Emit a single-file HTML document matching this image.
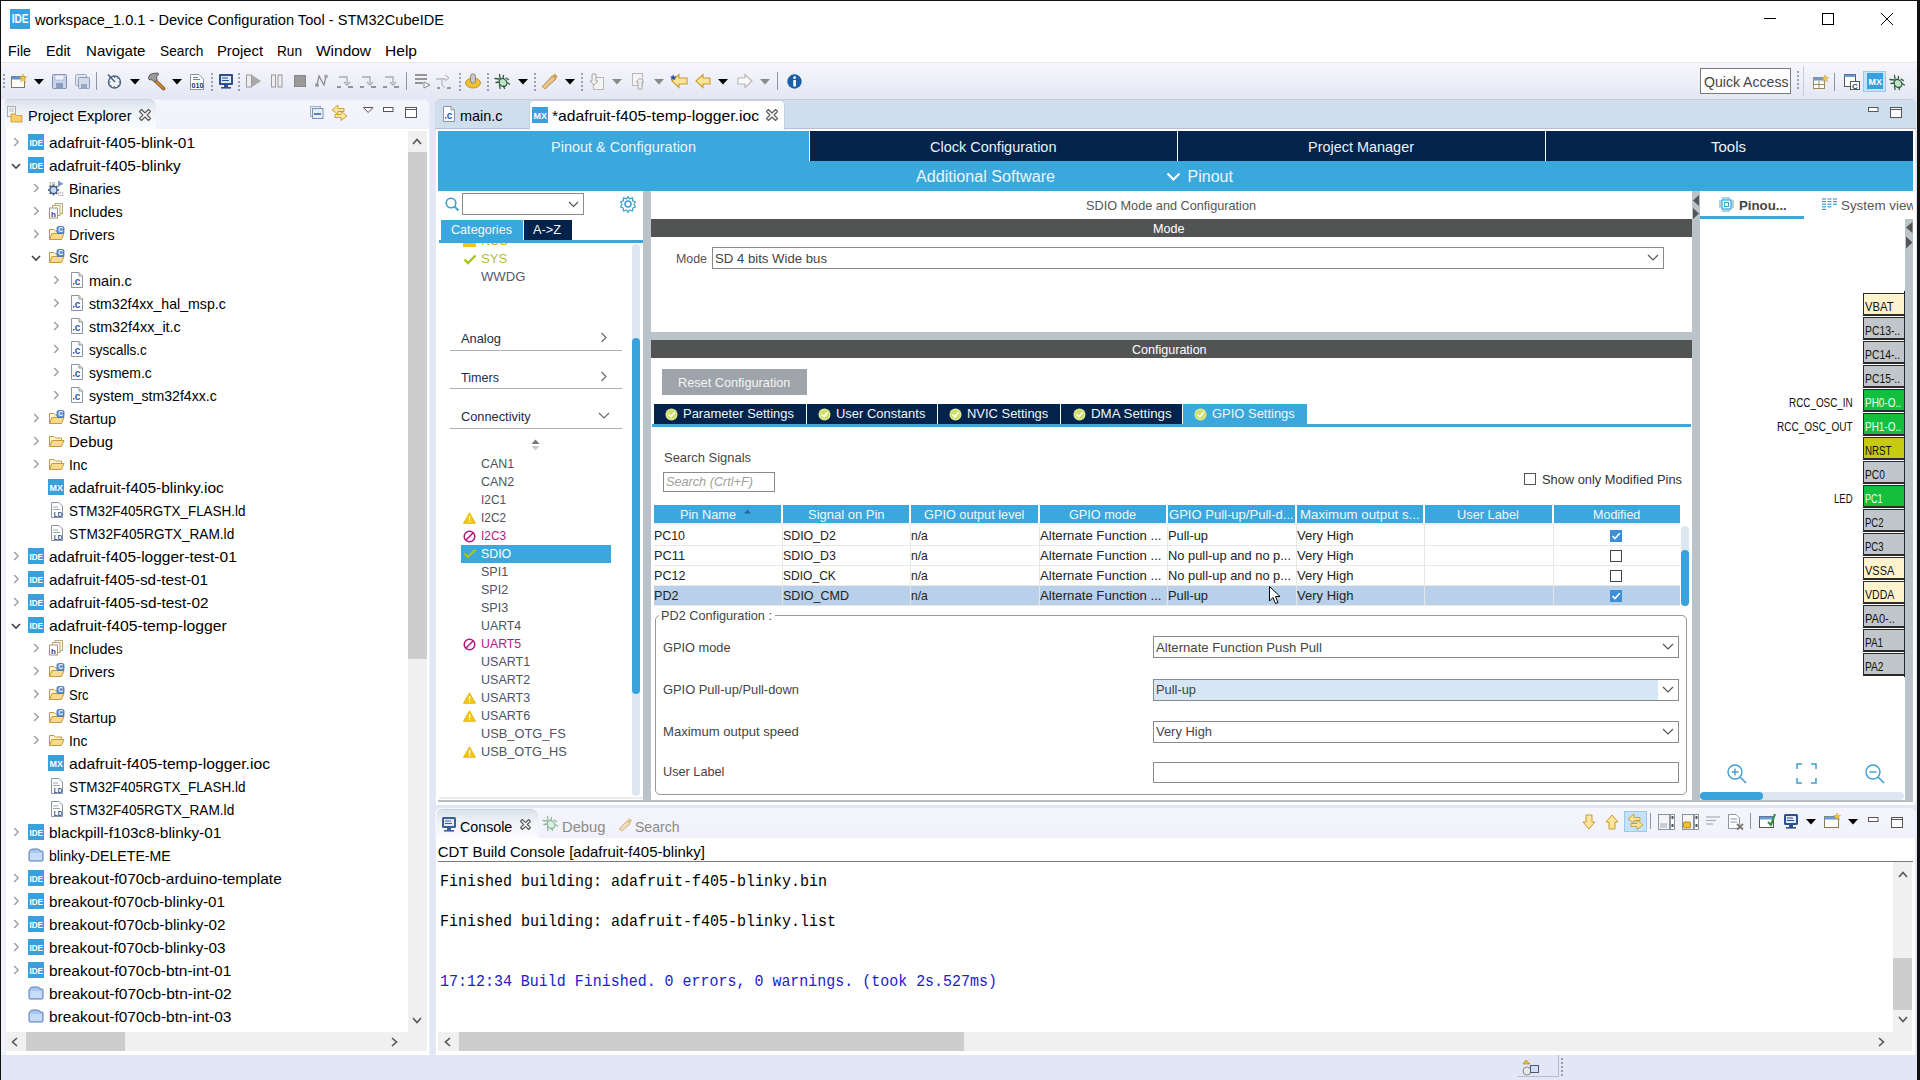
<!DOCTYPE html>
<html><head><meta charset="utf-8"><style>*{box-sizing:border-box;margin:0;padding:0}
html,body{width:1920px;height:1080px;overflow:hidden}
body{position:relative;font-family:"Liberation Sans",sans-serif;background:#e3e6f5}
.a{position:absolute}
.t{position:absolute;white-space:pre;line-height:1;font-family:"Liberation Sans",sans-serif}
svg{overflow:visible}
</style></head><body>
<div class="a" style="left:0px;top:0px;width:1920px;height:1080px;background:#e3e6f5;"></div>
<div class="a" style="left:1px;top:1px;width:1916px;height:61px;background:#fff;"></div>
<div class="a" style="left:1px;top:62px;width:1916px;height:37px;background:linear-gradient(#f7f7fb,#eeeff8 50%,#e2e7f3);"></div>
<div class="a" style="left:1px;top:62px;width:1916px;height:1px;background:#e6e6ec;"></div>
<div class="a" style="left:0px;top:0px;width:1920px;height:1px;background:#111;"></div>
<div class="a" style="left:0px;top:0px;width:1px;height:1080px;background:#111;"></div>
<div class="a" style="left:1917px;top:0px;width:3px;height:1080px;background:#111;"></div>
<svg class="a" style="left:10px;top:9px" width="20" height="20" viewBox="0 0 20 20"><rect width="20" height="20" fill="#38a0dc"/><text x="1.80" y="14.40" font-size="12.40" font-family="Liberation Sans" font-weight="bold" fill="#fff" textLength="16.80" lengthAdjust="spacingAndGlyphs">IDE</text></svg>
<div class="t" style="left:35.00px;top:12.30px;font-size:15px;color:#000;transform:scaleX(0.9740);transform-origin:0 0;">workspace_1.0.1 - Device Configuration Tool - STM32CubeIDE</div>
<svg class="a" style="left:1764px;top:12px" width="14" height="14" viewBox="0 0 14 14"><line x1="0" y1="6.5" x2="12" y2="6.5" stroke="#000" stroke-width="1"/></svg>
<svg class="a" style="left:1822px;top:13px" width="13" height="13" viewBox="0 0 13 13"><rect x="0.5" y="0.5" width="11" height="11" fill="none" stroke="#000" stroke-width="1"/></svg>
<svg class="a" style="left:1881px;top:13px" width="13" height="13" viewBox="0 0 13 13"><path d="M0 0 L12 12 M12 0 L0 12" stroke="#000" stroke-width="1"/></svg>
<div class="t" style="left:8.00px;top:43.30px;font-size:15px;color:#000;transform:scaleX(0.9515);transform-origin:0 0;">File</div>
<div class="t" style="left:45.50px;top:43.30px;font-size:15px;color:#000;transform:scaleX(0.9474);transform-origin:0 0;">Edit</div>
<div class="t" style="left:85.50px;top:43.30px;font-size:15px;color:#000;transform:scaleX(1.0050);transform-origin:0 0;">Navigate</div>
<div class="t" style="left:159.50px;top:43.30px;font-size:15px;color:#000;transform:scaleX(0.9152);transform-origin:0 0;">Search</div>
<div class="t" style="left:217.00px;top:43.30px;font-size:15px;color:#000;transform:scaleX(0.9853);transform-origin:0 0;">Project</div>
<div class="t" style="left:277.00px;top:43.30px;font-size:15px;color:#000;transform:scaleX(0.9081);transform-origin:0 0;">Run</div>
<div class="t" style="left:316.00px;top:43.30px;font-size:15px;color:#000;transform:scaleX(1.0307);transform-origin:0 0;">Window</div>
<div class="t" style="left:385.00px;top:43.30px;font-size:15px;color:#000;transform:scaleX(1.0370);transform-origin:0 0;">Help</div>
<svg class="a" style="left:3px;top:74px" width="2" height="16" viewBox="0 0 2 16"><rect x="0" y="0" width="2" height="2" fill="#9aa0ad"/><rect x="0" y="4" width="2" height="2" fill="#9aa0ad"/><rect x="0" y="8" width="2" height="2" fill="#9aa0ad"/><rect x="0" y="12" width="2" height="2" fill="#9aa0ad"/></svg>
<svg class="a" style="left:11px;top:74px" width="16" height="16" viewBox="0 0 16 16"><rect x="0.5" y="2.5" width="13" height="11" fill="#fff" stroke="#8a7a55"/><rect x="0.5" y="2.5" width="13" height="3" fill="#5b8fd0"/><path d="M12 0 L13 3 L16 3 L13.5 5 L14.5 8 L12 6 L9.5 8 L10.5 5 L8 3 L11 3 Z" fill="#f5c842" stroke="#c9962e" stroke-width="0.5"/></svg>
<svg class="a" style="left:34px;top:79px" width="10" height="6" viewBox="0 0 10 6"><path d="M0 0 H10 L5 5.5 Z" fill="#000"/></svg>
<svg class="a" style="left:52px;top:74px" width="15" height="15" viewBox="0 0 15 15"><rect x="0.5" y="0.5" width="14" height="14" rx="1" fill="#c9d4ea" stroke="#7e8fb5"/><rect x="3" y="1" width="9" height="5" fill="#eef2fa" stroke="#9aa8c8" stroke-width="0.6"/><rect x="4" y="9" width="7" height="6" fill="#8a9bc0"/></svg>
<svg class="a" style="left:75px;top:74px" width="15" height="15" viewBox="0 0 15 15"><rect x="0.5" y="0.5" width="11" height="11" rx="1" fill="#dde3ef" stroke="#a0abc5"/><rect x="3.5" y="3.5" width="11" height="11" rx="1" fill="#d4dcec" stroke="#8d9bbb"/><rect x="6" y="10" width="6" height="5" fill="#9aa8c8"/></svg>
<div class="a" style="left:96px;top:72px;width:1px;height:18px;background:#8d94a3"></div>
<svg class="a" style="left:107px;top:74px" width="15" height="15" viewBox="0 0 15 15"><circle cx="7.5" cy="8" r="6" fill="#f4f6fa" stroke="#4a6282" stroke-width="1.4"/><path d="M7.5 2.5 V4 M13 8 H11.5 M7.5 13.5 V12 M2 8 H3.5 M11.4 4.1 L10.4 5.1 M11.4 11.9 L10.4 10.9 M3.6 11.9 L4.6 10.9" stroke="#4a6282" stroke-width="1"/><path d="M1 0.5 L8 8" stroke="#4a6282" stroke-width="1.6"/></svg>
<svg class="a" style="left:130px;top:79px" width="10" height="6" viewBox="0 0 10 6"><path d="M0 0 H10 L5 5.5 Z" fill="#000"/></svg>
<svg class="a" style="left:147px;top:72px" width="18" height="18" viewBox="0 0 18 18"><path d="M7 7.5 L16.5 16.5" stroke="#7a4a18" stroke-width="3.6" stroke-linecap="round"/><path d="M7 7.5 L16.5 16.5" stroke="#d08a3a" stroke-width="1.8" stroke-linecap="round"/><path d="M1.5 5.5 Q2 2 6 1.5 L10.5 1 Q12 1.2 11.5 2.8 L9.5 4.5 L10 8 L7.5 10 L5 7.5 L3.5 8 Q1 7.5 1.5 5.5 Z" fill="#9a9a9a" stroke="#5a5a5a" stroke-width="1"/></svg>
<svg class="a" style="left:172px;top:79px" width="10" height="6" viewBox="0 0 10 6"><path d="M0 0 H10 L5 5.5 Z" fill="#000"/></svg>
<svg class="a" style="left:190px;top:74px" width="15" height="16" viewBox="0 0 15 16"><path d="M0.5 0.5 H9 L13.5 5 V15.5 H0.5 Z" fill="#fff" stroke="#8a95a8"/><line x1="3" y1="3.5" x2="8" y2="3.5" stroke="#6a7fa8"/><line x1="3" y1="5.5" x2="10" y2="5.5" stroke="#6a7fa8"/><text x="7.5" y="14" font-size="7.5" font-family="Liberation Sans" font-weight="bold" fill="#1d3566" text-anchor="middle" textLength="12" lengthAdjust="spacingAndGlyphs">010</text></svg>
<svg class="a" style="left:211px;top:73px" width="2" height="18" viewBox="0 0 2 18"><rect x="0" y="0" width="2" height="2" fill="#9aa0ad"/><rect x="0" y="4" width="2" height="2" fill="#9aa0ad"/><rect x="0" y="8" width="2" height="2" fill="#9aa0ad"/><rect x="0" y="12" width="2" height="2" fill="#9aa0ad"/><rect x="0" y="16" width="2" height="2" fill="#9aa0ad"/></svg>
<svg class="a" style="left:219px;top:74px" width="14" height="15" viewBox="0 0 14 15"><rect x="0" y="0" width="14" height="11" rx="1" fill="#2d4f8e"/><rect x="2" y="2" width="10" height="7" fill="#e2eaf6"/><line x1="3" y1="4" x2="9" y2="4" stroke="#2d4f8e" stroke-width="1"/><line x1="3" y1="6.5" x2="10" y2="6.5" stroke="#2d4f8e" stroke-width="1"/><rect x="5" y="11" width="4" height="2" fill="#2d4f8e"/><rect x="2" y="13" width="10" height="1.6" fill="#2d4f8e"/></svg>
<svg class="a" style="left:238px;top:73px" width="2" height="18" viewBox="0 0 2 18"><rect x="0" y="0" width="2" height="2" fill="#9aa0ad"/><rect x="0" y="4" width="2" height="2" fill="#9aa0ad"/><rect x="0" y="8" width="2" height="2" fill="#9aa0ad"/><rect x="0" y="12" width="2" height="2" fill="#9aa0ad"/><rect x="0" y="16" width="2" height="2" fill="#9aa0ad"/></svg>
<svg class="a" style="left:246px;top:74px" width="16" height="14" viewBox="0 0 16 14"><rect x="0.5" y="1" width="5" height="12" fill="#eee" stroke="#9a9a9a"/><path d="M6 1 L15 7 L6 13 Z" fill="#aaa"/></svg>
<svg class="a" style="left:271px;top:74px" width="12" height="14" viewBox="0 0 12 14"><rect x="0.5" y="1" width="4" height="12" fill="#eee" stroke="#9a9a9a"/><rect x="7" y="1" width="4" height="12" fill="#eee" stroke="#9a9a9a"/></svg>
<svg class="a" style="left:294px;top:75px" width="12" height="12" viewBox="0 0 12 12"><rect x="0.5" y="0.5" width="11" height="11" fill="#999" stroke="#888"/></svg>
<svg class="a" style="left:315px;top:74px" width="13" height="14" viewBox="0 0 13 14"><path d="M2 11 L4 2 L9 11 L11 2" fill="none" stroke="#888" stroke-width="1.2"/><circle cx="2" cy="11" r="2" fill="#999"/><circle cx="11" cy="2.5" r="2" fill="#aaa"/></svg>
<svg class="a" style="left:337px;top:75px" width="16" height="13" viewBox="0 0 16 13"><path d="M2 2 H10 V8" fill="none" stroke="#aaa" stroke-width="1.3"/><path d="M7 7 L10 10 L13 7" fill="none" stroke="#aaa" stroke-width="1.3"/><line x1="0" y1="12" x2="4" y2="12" stroke="#777" stroke-width="1.5"/><line x1="11" y1="12" x2="16" y2="12" stroke="#777" stroke-width="1.5"/></svg>
<svg class="a" style="left:360px;top:75px" width="16" height="13" viewBox="0 0 16 13"><path d="M2 2 H10 V8" fill="none" stroke="#aaa" stroke-width="1.3"/><path d="M7 7 L10 10 L13 7" fill="none" stroke="#aaa" stroke-width="1.3"/><line x1="0" y1="12" x2="4" y2="12" stroke="#777" stroke-width="1.5"/><line x1="11" y1="12" x2="16" y2="12" stroke="#777" stroke-width="1.5"/></svg>
<svg class="a" style="left:383px;top:75px" width="16" height="13" viewBox="0 0 16 13"><path d="M2 2 H10 V8" fill="none" stroke="#aaa" stroke-width="1.3"/><path d="M7 7 L10 10 L13 7" fill="none" stroke="#aaa" stroke-width="1.3"/><line x1="0" y1="12" x2="4" y2="12" stroke="#777" stroke-width="1.5"/><line x1="11" y1="12" x2="16" y2="12" stroke="#777" stroke-width="1.5"/></svg>
<div class="a" style="left:406px;top:72px;width:1px;height:18px;background:#8d94a3"></div>
<svg class="a" style="left:415px;top:74px" width="16" height="15" viewBox="0 0 16 15"><line x1="0" y1="1" x2="12" y2="1" stroke="#777" stroke-width="1.5"/><line x1="0" y1="5" x2="12" y2="5" stroke="#777" stroke-width="1.5"/><line x1="0" y1="9" x2="8" y2="9" stroke="#777" stroke-width="1.5"/><path d="M9 8 L15 11 L9 14 Z" fill="#fff" stroke="#888"/></svg>
<svg class="a" style="left:436px;top:74px" width="16" height="15" viewBox="0 0 16 15"><line x1="0" y1="5" x2="10" y2="5" stroke="#aaa" stroke-width="1.2"/><path d="M9 1 L13 4 L9 7" fill="none" stroke="#aaa"/><path d="M6 6 V11 L9 14" fill="none" stroke="#aaa"/><line x1="1" y1="14" x2="4" y2="14" stroke="#777" stroke-width="1.4"/><line x1="11" y1="14" x2="15" y2="14" stroke="#777" stroke-width="1.4"/></svg>
<svg class="a" style="left:459px;top:73px" width="2" height="18" viewBox="0 0 2 18"><rect x="0" y="0" width="2" height="2" fill="#9aa0ad"/><rect x="0" y="4" width="2" height="2" fill="#9aa0ad"/><rect x="0" y="8" width="2" height="2" fill="#9aa0ad"/><rect x="0" y="12" width="2" height="2" fill="#9aa0ad"/><rect x="0" y="16" width="2" height="2" fill="#9aa0ad"/></svg>
<svg class="a" style="left:465px;top:73px" width="16" height="16" viewBox="0 0 16 16"><ellipse cx="8" cy="10" rx="7.5" ry="5" fill="#f0c030" stroke="#b08a10" stroke-width="0.8"/><rect x="5.5" y="1" width="5" height="9" rx="2" fill="#c8c8c8" stroke="#777" stroke-width="0.8"/></svg>
<svg class="a" style="left:487px;top:73px" width="2" height="18" viewBox="0 0 2 18"><rect x="0" y="0" width="2" height="2" fill="#9aa0ad"/><rect x="0" y="4" width="2" height="2" fill="#9aa0ad"/><rect x="0" y="8" width="2" height="2" fill="#9aa0ad"/><rect x="0" y="12" width="2" height="2" fill="#9aa0ad"/><rect x="0" y="16" width="2" height="2" fill="#9aa0ad"/></svg>
<svg class="a" style="left:495px;top:74px" width="16" height="16" viewBox="0 0 16 16"><ellipse cx="8" cy="8.5" rx="3.6" ry="4.3" transform="rotate(-40 8 8.5)" fill="#bfe6c6" stroke="#2f5a3e" stroke-width="1.2"/><path d="M4.5 0.5 L5 4 M8.5 1.5 L8 4.5 M0 4.5 L4 5 M1 8.5 L4.5 8 M4.5 11 L5 14.5 M8.5 12 L9.5 14.5 M11 4 L13.5 5.5 M12 8.5 L14.5 10" stroke="#2f5a3e" stroke-width="1.3" stroke-linecap="round"/></svg>
<svg class="a" style="left:518px;top:79px" width="10" height="6" viewBox="0 0 10 6"><path d="M0 0 H10 L5 5.5 Z" fill="#000"/></svg>
<svg class="a" style="left:534px;top:73px" width="2" height="18" viewBox="0 0 2 18"><rect x="0" y="0" width="2" height="2" fill="#9aa0ad"/><rect x="0" y="4" width="2" height="2" fill="#9aa0ad"/><rect x="0" y="8" width="2" height="2" fill="#9aa0ad"/><rect x="0" y="12" width="2" height="2" fill="#9aa0ad"/><rect x="0" y="16" width="2" height="2" fill="#9aa0ad"/></svg>
<svg class="a" style="left:540px;top:73px" width="18" height="17" viewBox="0 0 18 17"><path d="M2 14 L12 3 L16 6 L5 16 Z" fill="#e8c38a" stroke="#a37a40" stroke-width="0.8"/><path d="M12 3 L15 0.5 L17.5 3.5 L16 6 Z" fill="#d4a050"/><path d="M2 14 L5 16 L1 17 Z" fill="#f4e6cc"/></svg>
<svg class="a" style="left:565px;top:79px" width="10" height="6" viewBox="0 0 10 6"><path d="M0 0 H10 L5 5.5 Z" fill="#000"/></svg>
<svg class="a" style="left:581px;top:73px" width="2" height="18" viewBox="0 0 2 18"><rect x="0" y="0" width="2" height="2" fill="#9aa0ad"/><rect x="0" y="4" width="2" height="2" fill="#9aa0ad"/><rect x="0" y="8" width="2" height="2" fill="#9aa0ad"/><rect x="0" y="12" width="2" height="2" fill="#9aa0ad"/><rect x="0" y="16" width="2" height="2" fill="#9aa0ad"/></svg>
<svg class="a" style="left:589px;top:73px" width="15" height="17" viewBox="0 0 15 17"><rect x="4.5" y="4.5" width="10" height="12" fill="#f4f4f4" stroke="#b8b8b8"/><path d="M3 1 V8 H1 L5 12 L9 8 H7 V1 Z" fill="#eee" stroke="#aaa"/></svg>
<svg class="a" style="left:612px;top:79px" width="10" height="6" viewBox="0 0 10 6"><path d="M0 0 H10 L5 5.5 Z" fill="#8a8a8a"/></svg>
<svg class="a" style="left:632px;top:73px" width="15" height="17" viewBox="0 0 15 17"><rect x="0.5" y="0.5" width="10" height="12" fill="#f4f4f4" stroke="#b8b8b8"/><path d="M6 16 V9 H4 L8 5 L12 9 H10 V16 Z" fill="#eee" stroke="#aaa"/></svg>
<svg class="a" style="left:654px;top:79px" width="10" height="6" viewBox="0 0 10 6"><path d="M0 0 H10 L5 5.5 Z" fill="#8a8a8a"/></svg>
<svg class="a" style="left:670px;top:74px" width="18" height="15" viewBox="0 0 18 15"><path d="M17 4 H9 V0.5 L2 7 L9 13.5 V10 H17 Z" fill="#fbe59a" stroke="#c99a2a" stroke-width="1.1"/><path d="M3 0 L4 2.5 L6.5 2 L4.5 4 L5.5 6 L3 5 L1 6.5 L1.5 4 L0 2.5 L2.5 2.5 Z" fill="#1f4fa0"/></svg>
<svg class="a" style="left:695px;top:74px" width="16" height="15" viewBox="0 0 16 15"><path d="M15 4 H8 V0.5 L1 7 L8 13.5 V10 H15 Z" fill="#fbe59a" stroke="#c99a2a" stroke-width="1.1"/></svg>
<svg class="a" style="left:718px;top:79px" width="10" height="6" viewBox="0 0 10 6"><path d="M0 0 H10 L5 5.5 Z" fill="#000"/></svg>
<svg class="a" style="left:737px;top:74px" width="16" height="15" viewBox="0 0 16 15"><path d="M1 4 H8 V0.5 L15 7 L8 13.5 V10 H1 Z" fill="#fafafa" stroke="#b5b5b5" stroke-width="1.1"/></svg>
<svg class="a" style="left:760px;top:79px" width="10" height="6" viewBox="0 0 10 6"><path d="M0 0 H10 L5 5.5 Z" fill="#8a8a8a"/></svg>
<div class="a" style="left:777px;top:72px;width:1px;height:18px;background:#8d94a3"></div>
<svg class="a" style="left:787px;top:74px" width="15" height="15" viewBox="0 0 15 15"><circle cx="7.5" cy="7.5" r="7.2" fill="#1a5fa8"/><rect x="6.3" y="6" width="2.6" height="6.5" fill="#fff"/><circle cx="7.6" cy="3.7" r="1.4" fill="#fff"/></svg>
<div class="a" style="left:1700px;top:68px;width:91px;height:26px;background:#fff;border:1px solid #7a7a7a"></div>
<div class="t" style="left:1703.50px;top:73.80px;font-size:15px;color:#444;transform:scaleX(0.9386);transform-origin:0 0;">Quick Access</div>
<svg class="a" style="left:1797px;top:71px" width="2" height="20" viewBox="0 0 2 20"><rect x="0" y="0" width="2" height="2" fill="#9aa0ad"/><rect x="0" y="4" width="2" height="2" fill="#9aa0ad"/><rect x="0" y="8" width="2" height="2" fill="#9aa0ad"/><rect x="0" y="12" width="2" height="2" fill="#9aa0ad"/><rect x="0" y="16" width="2" height="2" fill="#9aa0ad"/></svg>
<div class="a" style="left:1803px;top:66px;width:1px;height:30px;background:#c8ccd8"></div>
<svg class="a" style="left:1813px;top:75px" width="16" height="15" viewBox="0 0 16 15"><rect x="0.5" y="2.5" width="11" height="11" fill="#fff" stroke="#9a8a5a"/><rect x="0.5" y="2.5" width="11" height="3" fill="#6b9ad8"/><line x1="6" y1="5.5" x2="6" y2="13.5" stroke="#9a8a5a"/><line x1="0.5" y1="9.5" x2="11.5" y2="9.5" stroke="#9a8a5a"/><path d="M12 0 L13 2.5 L15.5 2.5 L13.5 4 L14.5 6.5 L12 5 L9.5 6.5 L10.5 4 L8.5 2.5 L11 2.5 Z" fill="#f5c842" stroke="#c9962e" stroke-width="0.5"/></svg>
<div class="a" style="left:1834px;top:73px;width:1px;height:18px;background:#8d94a3"></div>
<svg class="a" style="left:1844px;top:74px" width="16" height="16" viewBox="0 0 16 16"><rect x="0.5" y="0.5" width="11" height="12" fill="#fff" stroke="#555"/><rect x="0.5" y="0.5" width="11" height="2.5" fill="#6b9ad8"/><rect x="6.5" y="7.5" width="9" height="8" fill="#fff" stroke="#555"/><text x="11" y="14.5" font-size="8" font-family="Liberation Sans" font-weight="bold" fill="#1d3f7a" text-anchor="middle">C</text></svg>
<div class="a" style="left:1863px;top:71px;width:23px;height:21px;background:#c5e2fa;border:1px solid #99c9f0"></div>
<svg class="a" style="left:1867px;top:73px" width="16" height="16" viewBox="0 0 16 16"><rect width="16" height="16" fill="#38a0dc"/><text x="1.44" y="11.52" font-size="9.92" font-family="Liberation Sans" font-weight="bold" fill="#fff" textLength="13.44" lengthAdjust="spacingAndGlyphs">MX</text></svg>
<svg class="a" style="left:1890px;top:75px" width="16" height="16" viewBox="0 0 16 16"><ellipse cx="8" cy="8.5" rx="3.6" ry="4.3" transform="rotate(-40 8 8.5)" fill="#bfe6c6" stroke="#2f5a3e" stroke-width="1.2"/><path d="M4.5 0.5 L5 4 M8.5 1.5 L8 4.5 M0 4.5 L4 5 M1 8.5 L4.5 8 M4.5 11 L5 14.5 M8.5 12 L9.5 14.5 M11 4 L13.5 5.5 M12 8.5 L14.5 10" stroke="#2f5a3e" stroke-width="1.3" stroke-linecap="round"/></svg>
<div class="a" style="left:1px;top:99px;width:4px;height:956px;background:#f2f3fa;"></div>
<div class="a" style="left:5px;top:99px;width:425px;height:956px;background:#fff;border-radius:6px 6px 0 0;border:1px solid #eceef8;border-bottom:none"></div>
<div class="a" style="left:5px;top:99px;width:425px;height:30px;background:linear-gradient(#f5f6fc,#f0f1fa);border-radius:6px 6px 0 0;border:1px solid #e9ebf6;border-bottom:none"></div>
<div class="a" style="left:5px;top:99px;width:151px;height:30px;background:linear-gradient(#d9e3ec,#eef2f7 40%,#fbfcfe);border-radius:6px 8px 0 0;border-top:1px solid #c9d2dc"></div>
<svg class="a" style="left:7px;top:106px" width="16" height="17" viewBox="0 0 16 17"><rect x="0.5" y="0.5" width="8" height="10" fill="#f4f4f4" stroke="#aaa"/><line x1="2" y1="3" x2="7" y2="3" stroke="#bbb"/><line x1="2" y1="5" x2="7" y2="5" stroke="#bbb"/><path d="M4 8 h4 l1.5 1.5 H15 V16 H4 Z" fill="#f7d06a" stroke="#c9962e" stroke-width="0.8"/></svg>
<div class="t" style="left:27.50px;top:107.80px;font-size:15px;color:#000;transform:scaleX(0.9698);transform-origin:0 0;">Project Explorer</div>
<svg class="a" style="left:139px;top:109px" width="12" height="12" viewBox="0 0 12 12"><path d="M0.50 2.50 L2.50 0.50 L6.00 4.00 L9.50 0.50 L11.50 2.50 L8.00 6.00 L11.50 9.50 L9.50 11.50 L6.00 8.00 L2.50 11.50 L0.50 9.50 L4.00 6.00 Z" fill="#fff" stroke="#555" stroke-width="1.1" stroke-linejoin="round"/></svg>
<svg class="a" style="left:310px;top:106px" width="14" height="13" viewBox="0 0 14 13"><rect x="0.5" y="0.5" width="10" height="10" fill="#e8eef8" stroke="#9fb0cc"/><rect x="2.5" y="2.5" width="10.5" height="10" fill="#dff0fb" stroke="#7e92b5"/><line x1="4" y1="8" x2="11" y2="8" stroke="#1d3f7a" stroke-width="1.3"/></svg>
<svg class="a" style="left:331px;top:104px" width="17" height="17" viewBox="0 0 17 17"><path d="M7 1 L1 6 L7 10 V7.5 H13 V4.5 H7 Z" fill="#fbe59a" stroke="#c99a2a" stroke-width="0.9"/><path d="M10 7 L16 12 L10 16.5 V13.5 H4 V10.5 H10 Z" fill="#fbe59a" stroke="#c99a2a" stroke-width="0.9"/></svg>
<svg class="a" style="left:363px;top:107px" width="11" height="6" viewBox="0 0 11 6"><path d="M0.5 0.5 H10 L5.2 5.5 Z" fill="#fff" stroke="#555" stroke-width="1"/></svg>
<svg class="a" style="left:383px;top:107px" width="11" height="5" viewBox="0 0 11 5"><rect x="0.5" y="0.5" width="9.5" height="4" fill="#fff" stroke="#555" stroke-width="1"/></svg>
<svg class="a" style="left:405px;top:107px" width="12" height="11" viewBox="0 0 12 11"><rect x="0.5" y="0.5" width="11" height="10" fill="#fff" stroke="#555" stroke-width="1"/><line x1="0.5" y1="2.5" x2="11.5" y2="2.5" stroke="#555"/></svg>
<div class="a" style="left:408px;top:131px;width:19px;height:901px;background:#f0f0f0;"></div>
<div class="a" style="left:408px;top:152px;width:19px;height:507px;background:#cdcdcd;"></div>
<svg class="a" style="left:412px;top:138px" width="10" height="7" viewBox="0 0 10 7"><path d="M1 6 L5 1.5 L9 6" fill="none" stroke="#555" stroke-width="1.6"/></svg>
<svg class="a" style="left:412px;top:1017px" width="10" height="7" viewBox="0 0 10 7"><path d="M1 1 L5 5.5 L9 1" fill="none" stroke="#555" stroke-width="1.6"/></svg>
<div class="a" style="left:5px;top:1032px;width:403px;height:19px;background:#f0f0f0;"></div>
<div class="a" style="left:26px;top:1032px;width:99px;height:19px;background:#cdcdcd;"></div>
<svg class="a" style="left:11px;top:1037px" width="7" height="10" viewBox="0 0 7 10"><path d="M6 1 L1.5 5 L6 9" fill="none" stroke="#555" stroke-width="1.6"/></svg>
<svg class="a" style="left:391px;top:1037px" width="7" height="10" viewBox="0 0 7 10"><path d="M1 1 L5.5 5 L1 9" fill="none" stroke="#555" stroke-width="1.6"/></svg>
<div class="a" style="left:408px;top:1032px;width:19px;height:19px;background:#f0f0f0;"></div>
<svg class="a" style="left:12px;top:137px" width="8" height="10" viewBox="0 0 8 10"><path d="M2.2 1 L6.2 5 L2.2 9" fill="none" stroke="#9a9a9a" stroke-width="1.3"/></svg>
<svg class="a" style="left:28px;top:134px" width="16" height="16" viewBox="0 0 16 16"><rect width="16" height="16" fill="#38a0dc"/><text x="1.44" y="11.52" font-size="9.92" font-family="Liberation Sans" font-weight="bold" fill="#fff" textLength="13.44" lengthAdjust="spacingAndGlyphs">IDE</text></svg>
<div class="t" style="left:49.00px;top:134.80px;font-size:15px;color:#000;transform:scaleX(1.0300);transform-origin:0 0;">adafruit-f405-blink-01</div>
<svg class="a" style="left:11px;top:162px" width="10" height="8" viewBox="0 0 10 8"><path d="M1 2 L5 6 L9 2" fill="none" stroke="#444" stroke-width="1.6"/></svg>
<svg class="a" style="left:28px;top:157px" width="16" height="16" viewBox="0 0 16 16"><rect width="16" height="16" fill="#38a0dc"/><text x="1.44" y="11.52" font-size="9.92" font-family="Liberation Sans" font-weight="bold" fill="#fff" textLength="13.44" lengthAdjust="spacingAndGlyphs">IDE</text></svg>
<div class="t" style="left:49.00px;top:157.80px;font-size:15px;color:#000;transform:scaleX(1.0327);transform-origin:0 0;">adafruit-f405-blinky</div>
<svg class="a" style="left:32px;top:183px" width="8" height="10" viewBox="0 0 8 10"><path d="M2.2 1 L6.2 5 L2.2 9" fill="none" stroke="#9a9a9a" stroke-width="1.3"/></svg>
<svg class="a" style="left:48px;top:180px" width="16" height="16" viewBox="0 0 16 16"><circle cx="5.5" cy="10" r="3.6" fill="#c8d6ea" stroke="#34507e" stroke-width="1.2"/><path d="M5.5 4.5 V6.3 M5.5 13.7 V15.5 M0 10 H1.8 M9.2 10 H11 M1.6 6.1 L2.9 7.4 M8.1 12.6 L9.4 13.9 M1.6 13.9 L2.9 12.6 M8.1 7.4 L9.4 6.1" stroke="#34507e" stroke-width="1.4"/><path d="M10 0.5 L15.5 3.8 L10 7 Z" fill="#7f98c4"/><text x="1" y="5.5" font-size="5.5" font-family="Liberation Sans" fill="#777">10</text><text x="10" y="15.5" font-size="5.5" font-family="Liberation Sans" fill="#999">01</text></svg>
<div class="t" style="left:69.00px;top:180.80px;font-size:15px;color:#000;transform:scaleX(0.9547);transform-origin:0 0;">Binaries</div>
<svg class="a" style="left:32px;top:206px" width="8" height="10" viewBox="0 0 8 10"><path d="M2.2 1 L6.2 5 L2.2 9" fill="none" stroke="#9a9a9a" stroke-width="1.3"/></svg>
<svg class="a" style="left:48px;top:203px" width="16" height="16" viewBox="0 0 16 16"><rect x="7" y="0.5" width="7.5" height="10" fill="#fffaf0" stroke="#b8a878"/><rect x="4.5" y="2.5" width="7.5" height="10" fill="#fffaf0" stroke="#b8a878"/><rect x="1.5" y="5" width="8" height="10" fill="#fff" stroke="#a89868"/><text x="5.5" y="13.5" font-size="8" font-family="Liberation Sans" font-weight="bold" fill="#2a3f78" text-anchor="middle">h</text></svg>
<div class="t" style="left:69.00px;top:203.80px;font-size:15px;color:#000;transform:scaleX(0.9620);transform-origin:0 0;">Includes</div>
<svg class="a" style="left:32px;top:229px" width="8" height="10" viewBox="0 0 8 10"><path d="M2.2 1 L6.2 5 L2.2 9" fill="none" stroke="#9a9a9a" stroke-width="1.3"/></svg>
<svg class="a" style="left:48px;top:226px" width="17" height="16" viewBox="0 0 17 16"><path d="M1.5 13.5 V3.5 H6 L7.5 5 H13.5 V7.5" fill="#fdf3d6" stroke="#c49a3c" stroke-width="1"/><path d="M1.5 13.5 L4 7.5 H16 L13.5 13.5 Z" fill="#f8d98e" stroke="#c49a3c" stroke-width="1" stroke-linejoin="round"/><rect x="9" y="0.5" width="7" height="7" rx="1.5" fill="#5b8fd6" stroke="#3f6fb8" stroke-width="0.8"/><text x="12.5" y="6.3" font-size="6.5" font-family="Liberation Sans" font-weight="bold" fill="#fff" text-anchor="middle">C</text></svg>
<div class="t" style="left:69.00px;top:226.80px;font-size:15px;color:#000;transform:scaleX(0.9632);transform-origin:0 0;">Drivers</div>
<svg class="a" style="left:31px;top:254px" width="10" height="8" viewBox="0 0 10 8"><path d="M1 2 L5 6 L9 2" fill="none" stroke="#444" stroke-width="1.6"/></svg>
<svg class="a" style="left:48px;top:249px" width="17" height="16" viewBox="0 0 17 16"><path d="M1.5 13.5 V3.5 H6 L7.5 5 H13.5 V7.5" fill="#fdf3d6" stroke="#c49a3c" stroke-width="1"/><path d="M1.5 13.5 L4 7.5 H16 L13.5 13.5 Z" fill="#f8d98e" stroke="#c49a3c" stroke-width="1" stroke-linejoin="round"/><rect x="9" y="0.5" width="7" height="7" rx="1.5" fill="#5b8fd6" stroke="#3f6fb8" stroke-width="0.8"/><text x="12.5" y="6.3" font-size="6.5" font-family="Liberation Sans" font-weight="bold" fill="#fff" text-anchor="middle">C</text></svg>
<div class="t" style="left:69.00px;top:249.80px;font-size:15px;color:#000;transform:scaleX(0.8667);transform-origin:0 0;">Src</div>
<svg class="a" style="left:52px;top:275px" width="8" height="10" viewBox="0 0 8 10"><path d="M2.2 1 L6.2 5 L2.2 9" fill="none" stroke="#9a9a9a" stroke-width="1.3"/></svg>
<svg class="a" style="left:70px;top:272px" width="14" height="16" viewBox="0 0 14 16"><path d="M1.5 0.5 H9 L12.5 4 V15.5 H1.5 Z" fill="#fff" stroke="#8a95a8"/><path d="M9 0.5 V4 H12.5" fill="#f4e3b0" stroke="#8a95a8"/><text x="7.5" y="13" font-size="10" font-family="Liberation Sans" font-weight="bold" fill="#2b5aa8" text-anchor="middle">c</text><rect x="3" y="11" width="1.4" height="1.6" fill="#2b5aa8"/></svg>
<div class="t" style="left:89.00px;top:272.80px;font-size:15px;color:#000;transform:scaleX(0.9675);transform-origin:0 0;">main.c</div>
<svg class="a" style="left:52px;top:298px" width="8" height="10" viewBox="0 0 8 10"><path d="M2.2 1 L6.2 5 L2.2 9" fill="none" stroke="#9a9a9a" stroke-width="1.3"/></svg>
<svg class="a" style="left:70px;top:295px" width="14" height="16" viewBox="0 0 14 16"><path d="M1.5 0.5 H9 L12.5 4 V15.5 H1.5 Z" fill="#fff" stroke="#8a95a8"/><path d="M9 0.5 V4 H12.5" fill="#f4e3b0" stroke="#8a95a8"/><text x="7.5" y="13" font-size="10" font-family="Liberation Sans" font-weight="bold" fill="#2b5aa8" text-anchor="middle">c</text><rect x="3" y="11" width="1.4" height="1.6" fill="#2b5aa8"/></svg>
<div class="t" style="left:89.00px;top:295.80px;font-size:15px;color:#000;transform:scaleX(0.9426);transform-origin:0 0;">stm32f4xx_hal_msp.c</div>
<svg class="a" style="left:52px;top:321px" width="8" height="10" viewBox="0 0 8 10"><path d="M2.2 1 L6.2 5 L2.2 9" fill="none" stroke="#9a9a9a" stroke-width="1.3"/></svg>
<svg class="a" style="left:70px;top:318px" width="14" height="16" viewBox="0 0 14 16"><path d="M1.5 0.5 H9 L12.5 4 V15.5 H1.5 Z" fill="#fff" stroke="#8a95a8"/><path d="M9 0.5 V4 H12.5" fill="#f4e3b0" stroke="#8a95a8"/><text x="7.5" y="13" font-size="10" font-family="Liberation Sans" font-weight="bold" fill="#2b5aa8" text-anchor="middle">c</text><rect x="3" y="11" width="1.4" height="1.6" fill="#2b5aa8"/></svg>
<div class="t" style="left:89.00px;top:318.80px;font-size:15px;color:#000;transform:scaleX(0.9570);transform-origin:0 0;">stm32f4xx_it.c</div>
<svg class="a" style="left:52px;top:344px" width="8" height="10" viewBox="0 0 8 10"><path d="M2.2 1 L6.2 5 L2.2 9" fill="none" stroke="#9a9a9a" stroke-width="1.3"/></svg>
<svg class="a" style="left:70px;top:341px" width="14" height="16" viewBox="0 0 14 16"><path d="M1.5 0.5 H9 L12.5 4 V15.5 H1.5 Z" fill="#fff" stroke="#8a95a8"/><path d="M9 0.5 V4 H12.5" fill="#f4e3b0" stroke="#8a95a8"/><text x="7.5" y="13" font-size="10" font-family="Liberation Sans" font-weight="bold" fill="#2b5aa8" text-anchor="middle">c</text><rect x="3" y="11" width="1.4" height="1.6" fill="#2b5aa8"/></svg>
<div class="t" style="left:89.00px;top:341.80px;font-size:15px;color:#000;transform:scaleX(0.8997);transform-origin:0 0;">syscalls.c</div>
<svg class="a" style="left:52px;top:367px" width="8" height="10" viewBox="0 0 8 10"><path d="M2.2 1 L6.2 5 L2.2 9" fill="none" stroke="#9a9a9a" stroke-width="1.3"/></svg>
<svg class="a" style="left:70px;top:364px" width="14" height="16" viewBox="0 0 14 16"><path d="M1.5 0.5 H9 L12.5 4 V15.5 H1.5 Z" fill="#fff" stroke="#8a95a8"/><path d="M9 0.5 V4 H12.5" fill="#f4e3b0" stroke="#8a95a8"/><text x="7.5" y="13" font-size="10" font-family="Liberation Sans" font-weight="bold" fill="#2b5aa8" text-anchor="middle">c</text><rect x="3" y="11" width="1.4" height="1.6" fill="#2b5aa8"/></svg>
<div class="t" style="left:89.00px;top:364.80px;font-size:15px;color:#000;transform:scaleX(0.9296);transform-origin:0 0;">sysmem.c</div>
<svg class="a" style="left:52px;top:390px" width="8" height="10" viewBox="0 0 8 10"><path d="M2.2 1 L6.2 5 L2.2 9" fill="none" stroke="#9a9a9a" stroke-width="1.3"/></svg>
<svg class="a" style="left:70px;top:387px" width="14" height="16" viewBox="0 0 14 16"><path d="M1.5 0.5 H9 L12.5 4 V15.5 H1.5 Z" fill="#fff" stroke="#8a95a8"/><path d="M9 0.5 V4 H12.5" fill="#f4e3b0" stroke="#8a95a8"/><text x="7.5" y="13" font-size="10" font-family="Liberation Sans" font-weight="bold" fill="#2b5aa8" text-anchor="middle">c</text><rect x="3" y="11" width="1.4" height="1.6" fill="#2b5aa8"/></svg>
<div class="t" style="left:89.00px;top:387.80px;font-size:15px;color:#000;transform:scaleX(0.9402);transform-origin:0 0;">system_stm32f4xx.c</div>
<svg class="a" style="left:32px;top:413px" width="8" height="10" viewBox="0 0 8 10"><path d="M2.2 1 L6.2 5 L2.2 9" fill="none" stroke="#9a9a9a" stroke-width="1.3"/></svg>
<svg class="a" style="left:48px;top:410px" width="17" height="16" viewBox="0 0 17 16"><path d="M1.5 13.5 V3.5 H6 L7.5 5 H13.5 V7.5" fill="#fdf3d6" stroke="#c49a3c" stroke-width="1"/><path d="M1.5 13.5 L4 7.5 H16 L13.5 13.5 Z" fill="#f8d98e" stroke="#c49a3c" stroke-width="1" stroke-linejoin="round"/><rect x="9" y="0.5" width="7" height="7" rx="1.5" fill="#5b8fd6" stroke="#3f6fb8" stroke-width="0.8"/><text x="12.5" y="6.3" font-size="6.5" font-family="Liberation Sans" font-weight="bold" fill="#fff" text-anchor="middle">C</text></svg>
<div class="t" style="left:69.00px;top:410.80px;font-size:15px;color:#000;transform:scaleX(0.9767);transform-origin:0 0;">Startup</div>
<svg class="a" style="left:32px;top:436px" width="8" height="10" viewBox="0 0 8 10"><path d="M2.2 1 L6.2 5 L2.2 9" fill="none" stroke="#9a9a9a" stroke-width="1.3"/></svg>
<svg class="a" style="left:48px;top:433px" width="17" height="16" viewBox="0 0 17 16"><path d="M1.5 13.5 V3.5 H6 L7.5 5 H13.5 V7.5" fill="#fdf3d6" stroke="#c49a3c" stroke-width="1"/><path d="M1.5 13.5 L4 7.5 H16 L13.5 13.5 Z" fill="#f8d98e" stroke="#c49a3c" stroke-width="1" stroke-linejoin="round"/></svg>
<div class="t" style="left:69.00px;top:433.80px;font-size:15px;color:#000;">Debug</div>
<svg class="a" style="left:32px;top:459px" width="8" height="10" viewBox="0 0 8 10"><path d="M2.2 1 L6.2 5 L2.2 9" fill="none" stroke="#9a9a9a" stroke-width="1.3"/></svg>
<svg class="a" style="left:48px;top:456px" width="17" height="16" viewBox="0 0 17 16"><path d="M1.5 13.5 V3.5 H6 L7.5 5 H13.5 V7.5" fill="#fdf3d6" stroke="#c49a3c" stroke-width="1"/><path d="M1.5 13.5 L4 7.5 H16 L13.5 13.5 Z" fill="#f8d98e" stroke="#c49a3c" stroke-width="1" stroke-linejoin="round"/></svg>
<div class="t" style="left:69.00px;top:456.80px;font-size:15px;color:#000;transform:scaleX(0.9243);transform-origin:0 0;">Inc</div>
<svg class="a" style="left:48px;top:479px" width="16" height="16" viewBox="0 0 16 16"><rect width="16" height="16" fill="#38a0dc"/><text x="1.44" y="11.52" font-size="9.92" font-family="Liberation Sans" font-weight="bold" fill="#fff" textLength="13.44" lengthAdjust="spacingAndGlyphs">MX</text></svg>
<div class="t" style="left:69.00px;top:479.80px;font-size:15px;color:#000;transform:scaleX(1.0331);transform-origin:0 0;">adafruit-f405-blinky.ioc</div>
<svg class="a" style="left:50px;top:502px" width="14" height="16" viewBox="0 0 14 16"><path d="M1.5 0.5 H9 L12.5 4 V15.5 H1.5 Z" fill="#fff" stroke="#8a95a8"/><line x1="3" y1="5" x2="8" y2="5" stroke="#9aa"/><line x1="3" y1="7.5" x2="10" y2="7.5" stroke="#9aa"/><text x="8" y="14.5" font-size="6.5" font-family="Liberation Sans" font-weight="bold" fill="#2b4f8e" text-anchor="middle">LD</text></svg>
<div class="t" style="left:69.00px;top:502.80px;font-size:15px;color:#000;transform:scaleX(0.8971);transform-origin:0 0;">STM32F405RGTX_FLASH.ld</div>
<svg class="a" style="left:50px;top:525px" width="14" height="16" viewBox="0 0 14 16"><path d="M1.5 0.5 H9 L12.5 4 V15.5 H1.5 Z" fill="#fff" stroke="#8a95a8"/><line x1="3" y1="5" x2="8" y2="5" stroke="#9aa"/><line x1="3" y1="7.5" x2="10" y2="7.5" stroke="#9aa"/><text x="8" y="14.5" font-size="6.5" font-family="Liberation Sans" font-weight="bold" fill="#2b4f8e" text-anchor="middle">LD</text></svg>
<div class="t" style="left:69.00px;top:525.80px;font-size:15px;color:#000;transform:scaleX(0.9093);transform-origin:0 0;">STM32F405RGTX_RAM.ld</div>
<svg class="a" style="left:12px;top:551px" width="8" height="10" viewBox="0 0 8 10"><path d="M2.2 1 L6.2 5 L2.2 9" fill="none" stroke="#9a9a9a" stroke-width="1.3"/></svg>
<svg class="a" style="left:28px;top:548px" width="16" height="16" viewBox="0 0 16 16"><rect width="16" height="16" fill="#38a0dc"/><text x="1.44" y="11.52" font-size="9.92" font-family="Liberation Sans" font-weight="bold" fill="#fff" textLength="13.44" lengthAdjust="spacingAndGlyphs">IDE</text></svg>
<div class="t" style="left:49.00px;top:548.80px;font-size:15px;color:#000;transform:scaleX(1.0329);transform-origin:0 0;">adafruit-f405-logger-test-01</div>
<svg class="a" style="left:12px;top:574px" width="8" height="10" viewBox="0 0 8 10"><path d="M2.2 1 L6.2 5 L2.2 9" fill="none" stroke="#9a9a9a" stroke-width="1.3"/></svg>
<svg class="a" style="left:28px;top:571px" width="16" height="16" viewBox="0 0 16 16"><rect width="16" height="16" fill="#38a0dc"/><text x="1.44" y="11.52" font-size="9.92" font-family="Liberation Sans" font-weight="bold" fill="#fff" textLength="13.44" lengthAdjust="spacingAndGlyphs">IDE</text></svg>
<div class="t" style="left:49.00px;top:571.80px;font-size:15px;color:#000;transform:scaleX(1.0197);transform-origin:0 0;">adafruit-f405-sd-test-01</div>
<svg class="a" style="left:12px;top:597px" width="8" height="10" viewBox="0 0 8 10"><path d="M2.2 1 L6.2 5 L2.2 9" fill="none" stroke="#9a9a9a" stroke-width="1.3"/></svg>
<svg class="a" style="left:28px;top:594px" width="16" height="16" viewBox="0 0 16 16"><rect width="16" height="16" fill="#38a0dc"/><text x="1.44" y="11.52" font-size="9.92" font-family="Liberation Sans" font-weight="bold" fill="#fff" textLength="13.44" lengthAdjust="spacingAndGlyphs">IDE</text></svg>
<div class="t" style="left:49.00px;top:594.80px;font-size:15px;color:#000;transform:scaleX(1.0229);transform-origin:0 0;">adafruit-f405-sd-test-02</div>
<svg class="a" style="left:11px;top:622px" width="10" height="8" viewBox="0 0 10 8"><path d="M1 2 L5 6 L9 2" fill="none" stroke="#444" stroke-width="1.6"/></svg>
<svg class="a" style="left:28px;top:617px" width="16" height="16" viewBox="0 0 16 16"><rect width="16" height="16" fill="#38a0dc"/><text x="1.44" y="11.52" font-size="9.92" font-family="Liberation Sans" font-weight="bold" fill="#fff" textLength="13.44" lengthAdjust="spacingAndGlyphs">IDE</text></svg>
<div class="t" style="left:49.00px;top:617.80px;font-size:15px;color:#000;transform:scaleX(1.0501);transform-origin:0 0;">adafruit-f405-temp-logger</div>
<svg class="a" style="left:32px;top:643px" width="8" height="10" viewBox="0 0 8 10"><path d="M2.2 1 L6.2 5 L2.2 9" fill="none" stroke="#9a9a9a" stroke-width="1.3"/></svg>
<svg class="a" style="left:48px;top:640px" width="16" height="16" viewBox="0 0 16 16"><rect x="7" y="0.5" width="7.5" height="10" fill="#fffaf0" stroke="#b8a878"/><rect x="4.5" y="2.5" width="7.5" height="10" fill="#fffaf0" stroke="#b8a878"/><rect x="1.5" y="5" width="8" height="10" fill="#fff" stroke="#a89868"/><text x="5.5" y="13.5" font-size="8" font-family="Liberation Sans" font-weight="bold" fill="#2a3f78" text-anchor="middle">h</text></svg>
<div class="t" style="left:69.00px;top:640.80px;font-size:15px;color:#000;transform:scaleX(0.9620);transform-origin:0 0;">Includes</div>
<svg class="a" style="left:32px;top:666px" width="8" height="10" viewBox="0 0 8 10"><path d="M2.2 1 L6.2 5 L2.2 9" fill="none" stroke="#9a9a9a" stroke-width="1.3"/></svg>
<svg class="a" style="left:48px;top:663px" width="17" height="16" viewBox="0 0 17 16"><path d="M1.5 13.5 V3.5 H6 L7.5 5 H13.5 V7.5" fill="#fdf3d6" stroke="#c49a3c" stroke-width="1"/><path d="M1.5 13.5 L4 7.5 H16 L13.5 13.5 Z" fill="#f8d98e" stroke="#c49a3c" stroke-width="1" stroke-linejoin="round"/><rect x="9" y="0.5" width="7" height="7" rx="1.5" fill="#5b8fd6" stroke="#3f6fb8" stroke-width="0.8"/><text x="12.5" y="6.3" font-size="6.5" font-family="Liberation Sans" font-weight="bold" fill="#fff" text-anchor="middle">C</text></svg>
<div class="t" style="left:69.00px;top:663.80px;font-size:15px;color:#000;transform:scaleX(0.9632);transform-origin:0 0;">Drivers</div>
<svg class="a" style="left:32px;top:689px" width="8" height="10" viewBox="0 0 8 10"><path d="M2.2 1 L6.2 5 L2.2 9" fill="none" stroke="#9a9a9a" stroke-width="1.3"/></svg>
<svg class="a" style="left:48px;top:686px" width="17" height="16" viewBox="0 0 17 16"><path d="M1.5 13.5 V3.5 H6 L7.5 5 H13.5 V7.5" fill="#fdf3d6" stroke="#c49a3c" stroke-width="1"/><path d="M1.5 13.5 L4 7.5 H16 L13.5 13.5 Z" fill="#f8d98e" stroke="#c49a3c" stroke-width="1" stroke-linejoin="round"/><rect x="9" y="0.5" width="7" height="7" rx="1.5" fill="#5b8fd6" stroke="#3f6fb8" stroke-width="0.8"/><text x="12.5" y="6.3" font-size="6.5" font-family="Liberation Sans" font-weight="bold" fill="#fff" text-anchor="middle">C</text></svg>
<div class="t" style="left:69.00px;top:686.80px;font-size:15px;color:#000;transform:scaleX(0.8667);transform-origin:0 0;">Src</div>
<svg class="a" style="left:32px;top:712px" width="8" height="10" viewBox="0 0 8 10"><path d="M2.2 1 L6.2 5 L2.2 9" fill="none" stroke="#9a9a9a" stroke-width="1.3"/></svg>
<svg class="a" style="left:48px;top:709px" width="17" height="16" viewBox="0 0 17 16"><path d="M1.5 13.5 V3.5 H6 L7.5 5 H13.5 V7.5" fill="#fdf3d6" stroke="#c49a3c" stroke-width="1"/><path d="M1.5 13.5 L4 7.5 H16 L13.5 13.5 Z" fill="#f8d98e" stroke="#c49a3c" stroke-width="1" stroke-linejoin="round"/><rect x="9" y="0.5" width="7" height="7" rx="1.5" fill="#5b8fd6" stroke="#3f6fb8" stroke-width="0.8"/><text x="12.5" y="6.3" font-size="6.5" font-family="Liberation Sans" font-weight="bold" fill="#fff" text-anchor="middle">C</text></svg>
<div class="t" style="left:69.00px;top:709.80px;font-size:15px;color:#000;transform:scaleX(0.9767);transform-origin:0 0;">Startup</div>
<svg class="a" style="left:32px;top:735px" width="8" height="10" viewBox="0 0 8 10"><path d="M2.2 1 L6.2 5 L2.2 9" fill="none" stroke="#9a9a9a" stroke-width="1.3"/></svg>
<svg class="a" style="left:48px;top:732px" width="17" height="16" viewBox="0 0 17 16"><path d="M1.5 13.5 V3.5 H6 L7.5 5 H13.5 V7.5" fill="#fdf3d6" stroke="#c49a3c" stroke-width="1"/><path d="M1.5 13.5 L4 7.5 H16 L13.5 13.5 Z" fill="#f8d98e" stroke="#c49a3c" stroke-width="1" stroke-linejoin="round"/></svg>
<div class="t" style="left:69.00px;top:732.80px;font-size:15px;color:#000;transform:scaleX(0.9243);transform-origin:0 0;">Inc</div>
<svg class="a" style="left:48px;top:755px" width="16" height="16" viewBox="0 0 16 16"><rect width="16" height="16" fill="#38a0dc"/><text x="1.44" y="11.52" font-size="9.92" font-family="Liberation Sans" font-weight="bold" fill="#fff" textLength="13.44" lengthAdjust="spacingAndGlyphs">MX</text></svg>
<div class="t" style="left:69.00px;top:755.80px;font-size:15px;color:#000;transform:scaleX(1.0481);transform-origin:0 0;">adafruit-f405-temp-logger.ioc</div>
<svg class="a" style="left:50px;top:778px" width="14" height="16" viewBox="0 0 14 16"><path d="M1.5 0.5 H9 L12.5 4 V15.5 H1.5 Z" fill="#fff" stroke="#8a95a8"/><line x1="3" y1="5" x2="8" y2="5" stroke="#9aa"/><line x1="3" y1="7.5" x2="10" y2="7.5" stroke="#9aa"/><text x="8" y="14.5" font-size="6.5" font-family="Liberation Sans" font-weight="bold" fill="#2b4f8e" text-anchor="middle">LD</text></svg>
<div class="t" style="left:69.00px;top:778.80px;font-size:15px;color:#000;transform:scaleX(0.8971);transform-origin:0 0;">STM32F405RGTX_FLASH.ld</div>
<svg class="a" style="left:50px;top:801px" width="14" height="16" viewBox="0 0 14 16"><path d="M1.5 0.5 H9 L12.5 4 V15.5 H1.5 Z" fill="#fff" stroke="#8a95a8"/><line x1="3" y1="5" x2="8" y2="5" stroke="#9aa"/><line x1="3" y1="7.5" x2="10" y2="7.5" stroke="#9aa"/><text x="8" y="14.5" font-size="6.5" font-family="Liberation Sans" font-weight="bold" fill="#2b4f8e" text-anchor="middle">LD</text></svg>
<div class="t" style="left:69.00px;top:801.80px;font-size:15px;color:#000;transform:scaleX(0.9093);transform-origin:0 0;">STM32F405RGTX_RAM.ld</div>
<svg class="a" style="left:12px;top:827px" width="8" height="10" viewBox="0 0 8 10"><path d="M2.2 1 L6.2 5 L2.2 9" fill="none" stroke="#9a9a9a" stroke-width="1.3"/></svg>
<svg class="a" style="left:28px;top:824px" width="16" height="16" viewBox="0 0 16 16"><rect width="16" height="16" fill="#38a0dc"/><text x="1.44" y="11.52" font-size="9.92" font-family="Liberation Sans" font-weight="bold" fill="#fff" textLength="13.44" lengthAdjust="spacingAndGlyphs">IDE</text></svg>
<div class="t" style="left:49.00px;top:824.80px;font-size:15px;color:#000;transform:scaleX(1.0227);transform-origin:0 0;">blackpill-f103c8-blinky-01</div>
<svg class="a" style="left:28px;top:847px" width="16" height="16" viewBox="0 0 16 16"><path d="M2 4 Q2 2 5 2 H9 Q12 2 12 4 H14 Q15 4 15 5 V13 Q15 14 14 14 H2 Q1 14 1 13 V5 Q1 4 2 4 Z" fill="#a9c8f0" stroke="#5a7fb8" stroke-width="1"/><rect x="2" y="6" width="12" height="7" fill="#c5dbf7"/></svg>
<div class="t" style="left:49.00px;top:847.80px;font-size:15px;color:#000;transform:scaleX(0.9423);transform-origin:0 0;">blinky-DELETE-ME</div>
<svg class="a" style="left:12px;top:873px" width="8" height="10" viewBox="0 0 8 10"><path d="M2.2 1 L6.2 5 L2.2 9" fill="none" stroke="#9a9a9a" stroke-width="1.3"/></svg>
<svg class="a" style="left:28px;top:870px" width="16" height="16" viewBox="0 0 16 16"><rect width="16" height="16" fill="#38a0dc"/><text x="1.44" y="11.52" font-size="9.92" font-family="Liberation Sans" font-weight="bold" fill="#fff" textLength="13.44" lengthAdjust="spacingAndGlyphs">IDE</text></svg>
<div class="t" style="left:49.00px;top:870.80px;font-size:15px;color:#000;transform:scaleX(1.0300);transform-origin:0 0;">breakout-f070cb-arduino-template</div>
<svg class="a" style="left:12px;top:896px" width="8" height="10" viewBox="0 0 8 10"><path d="M2.2 1 L6.2 5 L2.2 9" fill="none" stroke="#9a9a9a" stroke-width="1.3"/></svg>
<svg class="a" style="left:28px;top:893px" width="16" height="16" viewBox="0 0 16 16"><rect width="16" height="16" fill="#38a0dc"/><text x="1.44" y="11.52" font-size="9.92" font-family="Liberation Sans" font-weight="bold" fill="#fff" textLength="13.44" lengthAdjust="spacingAndGlyphs">IDE</text></svg>
<div class="t" style="left:49.00px;top:893.80px;font-size:15px;color:#000;transform:scaleX(1.0148);transform-origin:0 0;">breakout-f070cb-blinky-01</div>
<svg class="a" style="left:12px;top:919px" width="8" height="10" viewBox="0 0 8 10"><path d="M2.2 1 L6.2 5 L2.2 9" fill="none" stroke="#9a9a9a" stroke-width="1.3"/></svg>
<svg class="a" style="left:28px;top:916px" width="16" height="16" viewBox="0 0 16 16"><rect width="16" height="16" fill="#38a0dc"/><text x="1.44" y="11.52" font-size="9.92" font-family="Liberation Sans" font-weight="bold" fill="#fff" textLength="13.44" lengthAdjust="spacingAndGlyphs">IDE</text></svg>
<div class="t" style="left:49.00px;top:916.80px;font-size:15px;color:#000;transform:scaleX(1.0177);transform-origin:0 0;">breakout-f070cb-blinky-02</div>
<svg class="a" style="left:12px;top:942px" width="8" height="10" viewBox="0 0 8 10"><path d="M2.2 1 L6.2 5 L2.2 9" fill="none" stroke="#9a9a9a" stroke-width="1.3"/></svg>
<svg class="a" style="left:28px;top:939px" width="16" height="16" viewBox="0 0 16 16"><rect width="16" height="16" fill="#38a0dc"/><text x="1.44" y="11.52" font-size="9.92" font-family="Liberation Sans" font-weight="bold" fill="#fff" textLength="13.44" lengthAdjust="spacingAndGlyphs">IDE</text></svg>
<div class="t" style="left:49.00px;top:939.80px;font-size:15px;color:#000;transform:scaleX(1.0177);transform-origin:0 0;">breakout-f070cb-blinky-03</div>
<svg class="a" style="left:12px;top:965px" width="8" height="10" viewBox="0 0 8 10"><path d="M2.2 1 L6.2 5 L2.2 9" fill="none" stroke="#9a9a9a" stroke-width="1.3"/></svg>
<svg class="a" style="left:28px;top:962px" width="16" height="16" viewBox="0 0 16 16"><rect width="16" height="16" fill="#38a0dc"/><text x="1.44" y="11.52" font-size="9.92" font-family="Liberation Sans" font-weight="bold" fill="#fff" textLength="13.44" lengthAdjust="spacingAndGlyphs">IDE</text></svg>
<div class="t" style="left:49.00px;top:962.80px;font-size:15px;color:#000;transform:scaleX(1.0309);transform-origin:0 0;">breakout-f070cb-btn-int-01</div>
<svg class="a" style="left:28px;top:985px" width="16" height="16" viewBox="0 0 16 16"><path d="M2 4 Q2 2 5 2 H9 Q12 2 12 4 H14 Q15 4 15 5 V13 Q15 14 14 14 H2 Q1 14 1 13 V5 Q1 4 2 4 Z" fill="#a9c8f0" stroke="#5a7fb8" stroke-width="1"/><rect x="2" y="6" width="12" height="7" fill="#c5dbf7"/></svg>
<div class="t" style="left:49.00px;top:985.80px;font-size:15px;color:#000;transform:scaleX(1.0338);transform-origin:0 0;">breakout-f070cb-btn-int-02</div>
<svg class="a" style="left:28px;top:1008px" width="16" height="16" viewBox="0 0 16 16"><path d="M2 4 Q2 2 5 2 H9 Q12 2 12 4 H14 Q15 4 15 5 V13 Q15 14 14 14 H2 Q1 14 1 13 V5 Q1 4 2 4 Z" fill="#a9c8f0" stroke="#5a7fb8" stroke-width="1"/><rect x="2" y="6" width="12" height="7" fill="#c5dbf7"/></svg>
<div class="t" style="left:49.00px;top:1008.80px;font-size:15px;color:#000;transform:scaleX(1.0323);transform-origin:0 0;">breakout-f070cb-btn-int-03</div>
<div class="a" style="left:435px;top:99px;width:1481px;height:706px;background:#fff;border-radius:6px 6px 0 0;border:1px solid #e6e9f5;border-bottom:none"></div>
<div class="a" style="left:435px;top:99px;width:1481px;height:30px;background:#cfdeed;border-radius:6px 6px 0 0;border-top:1px solid #c6cad8;border-bottom:1px solid #b9bdcc"></div>
<svg class="a" style="left:442px;top:106px" width="14" height="16" viewBox="0 0 14 16"><path d="M1.5 0.5 H9 L12.5 4 V15.5 H1.5 Z" fill="#fff" stroke="#8a95a8"/><path d="M9 0.5 V4 H12.5" fill="#f4e3b0" stroke="#8a95a8"/><text x="7.5" y="13" font-size="10" font-family="Liberation Sans" font-weight="bold" fill="#2b5aa8" text-anchor="middle">c</text><rect x="3" y="11" width="1.4" height="1.6" fill="#2b5aa8"/></svg>
<div class="t" style="left:460.00px;top:108.30px;font-size:15px;color:#000;transform:scaleX(0.9618);transform-origin:0 0;">main.c</div>
<div class="a" style="left:529px;top:100px;width:256px;height:30px;background:#fff;border-radius:5px 5px 0 0;border:1px solid #c5d0de;border-bottom:none"></div>
<svg class="a" style="left:532px;top:107px" width="16" height="16" viewBox="0 0 16 16"><rect width="16" height="16" fill="#38a0dc"/><text x="1.44" y="11.52" font-size="9.92" font-family="Liberation Sans" font-weight="bold" fill="#fff" textLength="13.44" lengthAdjust="spacingAndGlyphs">MX</text></svg>
<div class="t" style="left:551.50px;top:108.30px;font-size:15px;color:#000;transform:scaleX(1.0475);transform-origin:0 0;">*adafruit-f405-temp-logger.ioc</div>
<svg class="a" style="left:766px;top:109px" width="12" height="12" viewBox="0 0 12 12"><path d="M0.50 2.50 L2.50 0.50 L6.00 4.00 L9.50 0.50 L11.50 2.50 L8.00 6.00 L11.50 9.50 L9.50 11.50 L6.00 8.00 L2.50 11.50 L0.50 9.50 L4.00 6.00 Z" fill="#fff" stroke="#555" stroke-width="1.1" stroke-linejoin="round"/></svg>
<svg class="a" style="left:1868px;top:107px" width="11" height="5" viewBox="0 0 11 5"><rect x="0.5" y="0.5" width="9.5" height="4" fill="#fff" stroke="#555" stroke-width="1"/></svg>
<svg class="a" style="left:1890px;top:107px" width="12" height="11" viewBox="0 0 12 11"><rect x="0.5" y="0.5" width="11" height="10" fill="#fff" stroke="#555" stroke-width="1"/><line x1="0.5" y1="2.5" x2="11.5" y2="2.5" stroke="#555"/></svg>
<div class="a" style="left:438px;top:131px;width:1475px;height:60px;background:#3aa8dc;"></div>
<div class="a" style="left:810px;top:131px;width:367px;height:30px;background:#03234b;"></div>
<div class="a" style="left:1178px;top:131px;width:367px;height:30px;background:#03234b;"></div>
<div class="a" style="left:1546px;top:131px;width:367px;height:30px;background:#03234b;"></div>
<div class="a" style="left:809px;top:131px;width:1px;height:30px;background:#ffffff;"></div>
<div class="a" style="left:1177px;top:131px;width:1px;height:30px;background:#ffffff;"></div>
<div class="a" style="left:1545px;top:131px;width:1px;height:30px;background:#ffffff;"></div>
<div class="t" style="left:551.00px;top:139.30px;font-size:15px;color:#eaf6fd;transform:scaleX(0.9660);transform-origin:0 0;">Pinout &amp; Configuration</div>
<div class="t" style="left:930.00px;top:139.30px;font-size:15px;color:#eaf2fa;transform:scaleX(0.9663);transform-origin:0 0;">Clock Configuration</div>
<div class="t" style="left:1308.00px;top:139.30px;font-size:15px;color:#eaf2fa;transform:scaleX(0.9631);transform-origin:0 0;">Project Manager</div>
<div class="t" style="left:1711.00px;top:139.30px;font-size:15px;color:#eaf2fa;">Tools</div>
<div class="t" style="left:916.00px;top:168.96px;font-size:16px;color:#eaf6fd;transform:scaleX(1.0083);transform-origin:0 0;">Additional Software</div>
<svg class="a" style="left:1166px;top:172px" width="15" height="9" viewBox="0 0 15 9"><path d="M1.5 1.5 L7.5 7.5 L13.5 1.5" fill="none" stroke="#fff" stroke-width="2.2"/></svg>
<div class="t" style="left:1187.50px;top:168.96px;font-size:16px;color:#eaf6fd;">Pinout</div>
<div class="a" style="left:438px;top:191px;width:1475px;height:610px;background:#fff;"></div>
<svg class="a" style="left:445px;top:197px" width="15" height="15" viewBox="0 0 15 15"><circle cx="6" cy="6" r="4.8" fill="none" stroke="#3d9fcf" stroke-width="1.6"/><line x1="9.5" y1="9.5" x2="13.5" y2="13.5" stroke="#3d9fcf" stroke-width="1.8"/></svg>
<div class="a" style="left:462px;top:193px;width:122px;height:22px;background:#fff;border:1px solid #8c8c8c"></div>
<svg class="a" style="left:568px;top:201px" width="11" height="7" viewBox="0 0 11 7"><path d="M1 1 L5.5 5.5 L10 1" fill="none" stroke="#555" stroke-width="1.2"/></svg>
<svg class="a" style="left:619px;top:195px" width="18" height="18" viewBox="0 0 18 18"><circle cx="9" cy="9" r="3" fill="none" stroke="#3d9fcf" stroke-width="1.5"/><path d="M9 1.5 L10.5 3.8 L13.5 2.8 L13.8 5.8 L16.5 7 L14.8 9.5 L16.5 12 L13.8 13 L13.5 16 L10.5 15 L9 17.3 L7.5 15 L4.5 16 L4.2 13 L1.5 12 L3.2 9.5 L1.5 7 L4.2 5.8 L4.5 2.8 L7.5 3.8 Z" fill="none" stroke="#3d9fcf" stroke-width="1.3" stroke-linejoin="round"/></svg>
<div class="a" style="left:441px;top:220px;width:82px;height:21px;background:#3aa8dc;"></div>
<div class="a" style="left:524px;top:220px;width:48px;height:21px;background:#03234b;"></div>
<div class="t" style="left:450.50px;top:223.00px;font-size:13px;color:#f2f9fd;transform:scaleX(0.9702);transform-origin:0 0;">Categories</div>
<div class="t" style="left:533.00px;top:223.00px;font-size:13px;color:#f2f9fd;transform:scaleX(0.9808);transform-origin:0 0;">A-&gt;Z</div>
<div class="a" style="left:439px;top:240px;width:204px;height:3px;background:#3aa8dc;"></div>
<div class="a" style="left:439px;top:243px;width:193px;height:555px;overflow:hidden">
<div class="a" style="left:24px;top:0px;width:13px;height:4px;background:#f2c518"></div>
<div class="t" style="left:42.00px;top:-9.00px;font-size:13px;color:#c9b400;transform:scaleX(0.9584);transform-origin:0 0;">RCC</div>
</div>
<svg class="a" style="left:463px;top:254px" width="14" height="11" viewBox="0 0 14 11"><path d="M1.5 5.5 L5 9 L12.5 1.5" fill="none" stroke="#a8c41a" stroke-width="2.4"/></svg>
<div class="t" style="left:481.30px;top:251.57px;font-size:13.5px;color:#aec23a;transform:scaleX(0.9735);transform-origin:0 0;">SYS</div>
<div class="t" style="left:481.30px;top:270.07px;font-size:13.5px;color:#555b66;transform:scaleX(0.9708);transform-origin:0 0;">WWDG</div>
<div class="t" style="left:461.00px;top:331.97px;font-size:13.5px;color:#1f2a44;transform:scaleX(0.9513);transform-origin:0 0;">Analog</div>
<div class="a" style="left:450px;top:350px;width:172px;height:1px;background:#a9b0b8;"></div>
<svg class="a" style="left:600px;top:332.4px" width="8" height="11" viewBox="0 0 8 11"><path d="M1.5 1 L6 5.5 L1.5 10" fill="none" stroke="#666" stroke-width="1.1"/></svg>
<div class="t" style="left:461.00px;top:370.57px;font-size:13.5px;color:#1f2a44;transform:scaleX(0.9325);transform-origin:0 0;">Timers</div>
<div class="a" style="left:450px;top:388px;width:172px;height:1px;background:#a9b0b8;"></div>
<svg class="a" style="left:600px;top:371px" width="8" height="11" viewBox="0 0 8 11"><path d="M1.5 1 L6 5.5 L1.5 10" fill="none" stroke="#666" stroke-width="1.1"/></svg>
<div class="t" style="left:461.00px;top:409.77px;font-size:13.5px;color:#1f2a44;transform:scaleX(0.9477);transform-origin:0 0;">Connectivity</div>
<div class="a" style="left:450px;top:428px;width:172px;height:1px;background:#a9b0b8;"></div>
<svg class="a" style="left:598px;top:411.7px" width="12" height="7" viewBox="0 0 12 7"><path d="M1 1 L6 6 L11 1" fill="none" stroke="#666" stroke-width="1.1"/></svg>
<svg class="a" style="left:531px;top:439px" width="9" height="12" viewBox="0 0 9 12"><path d="M0.5 5 L4.5 0.5 L8.5 5 Z" fill="#777"/><path d="M0.5 7 L4.5 11.5 L8.5 7 Z" fill="#ccc"/></svg>
<div class="t" style="left:481.30px;top:457.07px;font-size:13.5px;color:#4d5360;transform:scaleX(0.9218);transform-origin:0 0;">CAN1</div>
<div class="t" style="left:481.30px;top:475.07px;font-size:13.5px;color:#4d5360;transform:scaleX(0.9218);transform-origin:0 0;">CAN2</div>
<div class="t" style="left:481.30px;top:493.07px;font-size:13.5px;color:#4d5360;transform:scaleX(0.8832);transform-origin:0 0;">I2C1</div>
<svg class="a" style="left:463px;top:512px" width="13" height="12" viewBox="0 0 13 12"><path d="M6.5 0.8 L12.5 11.3 H0.5 Z" fill="#f5c518" stroke="#e0ac00" stroke-width="0.8" stroke-linejoin="round"/><rect x="5.9" y="4" width="1.3" height="4" fill="#fff"/><rect x="5.9" y="9" width="1.3" height="1.3" fill="#fff"/></svg>
<div class="t" style="left:481.30px;top:511.07px;font-size:13.5px;color:#4d5360;transform:scaleX(0.8832);transform-origin:0 0;">I2C2</div>
<svg class="a" style="left:463px;top:530px" width="13" height="13" viewBox="0 0 13 13"><circle cx="6.5" cy="6.5" r="5.3" fill="none" stroke="#b5157e" stroke-width="1.5"/><line x1="2.8" y1="10.2" x2="10.2" y2="2.8" stroke="#b5157e" stroke-width="1.5"/></svg>
<div class="t" style="left:481.30px;top:529.07px;font-size:13.5px;color:#b5157e;transform:scaleX(0.8832);transform-origin:0 0;">I2C3</div>
<div class="a" style="left:461px;top:545px;width:150px;height:18px;background:#3aa8dc;"></div>
<svg class="a" style="left:463px;top:548px" width="14" height="11" viewBox="0 0 14 11"><path d="M1.5 5.5 L5 9 L12.5 1.5" fill="none" stroke="#a8c41a" stroke-width="2.4"/></svg>
<div class="t" style="left:481.30px;top:547.07px;font-size:13.5px;color:#ffffff;transform:scaleX(0.9147);transform-origin:0 0;">SDIO</div>
<div class="t" style="left:481.30px;top:565.07px;font-size:13.5px;color:#4d5360;transform:scaleX(0.9289);transform-origin:0 0;">SPI1</div>
<div class="t" style="left:481.30px;top:583.07px;font-size:13.5px;color:#4d5360;transform:scaleX(0.9289);transform-origin:0 0;">SPI2</div>
<div class="t" style="left:481.30px;top:601.07px;font-size:13.5px;color:#4d5360;transform:scaleX(0.9289);transform-origin:0 0;">SPI3</div>
<div class="t" style="left:481.30px;top:619.07px;font-size:13.5px;color:#4d5360;transform:scaleX(0.9133);transform-origin:0 0;">UART4</div>
<svg class="a" style="left:463px;top:638px" width="13" height="13" viewBox="0 0 13 13"><circle cx="6.5" cy="6.5" r="5.3" fill="none" stroke="#b5157e" stroke-width="1.5"/><line x1="2.8" y1="10.2" x2="10.2" y2="2.8" stroke="#b5157e" stroke-width="1.5"/></svg>
<div class="t" style="left:481.30px;top:637.07px;font-size:13.5px;color:#b5157e;transform:scaleX(0.9133);transform-origin:0 0;">UART5</div>
<div class="t" style="left:481.30px;top:655.07px;font-size:13.5px;color:#4d5360;transform:scaleX(0.9278);transform-origin:0 0;">USART1</div>
<div class="t" style="left:481.30px;top:673.07px;font-size:13.5px;color:#4d5360;transform:scaleX(0.9278);transform-origin:0 0;">USART2</div>
<svg class="a" style="left:463px;top:692px" width="13" height="12" viewBox="0 0 13 12"><path d="M6.5 0.8 L12.5 11.3 H0.5 Z" fill="#f5c518" stroke="#e0ac00" stroke-width="0.8" stroke-linejoin="round"/><rect x="5.9" y="4" width="1.3" height="4" fill="#fff"/><rect x="5.9" y="9" width="1.3" height="1.3" fill="#fff"/></svg>
<div class="t" style="left:481.30px;top:691.07px;font-size:13.5px;color:#4d5360;transform:scaleX(0.9278);transform-origin:0 0;">USART3</div>
<svg class="a" style="left:463px;top:710px" width="13" height="12" viewBox="0 0 13 12"><path d="M6.5 0.8 L12.5 11.3 H0.5 Z" fill="#f5c518" stroke="#e0ac00" stroke-width="0.8" stroke-linejoin="round"/><rect x="5.9" y="4" width="1.3" height="4" fill="#fff"/><rect x="5.9" y="9" width="1.3" height="1.3" fill="#fff"/></svg>
<div class="t" style="left:481.30px;top:709.07px;font-size:13.5px;color:#4d5360;transform:scaleX(0.9278);transform-origin:0 0;">USART6</div>
<div class="t" style="left:481.30px;top:727.07px;font-size:13.5px;color:#4d5360;transform:scaleX(0.9487);transform-origin:0 0;">USB_OTG_FS</div>
<svg class="a" style="left:463px;top:746px" width="13" height="12" viewBox="0 0 13 12"><path d="M6.5 0.8 L12.5 11.3 H0.5 Z" fill="#f5c518" stroke="#e0ac00" stroke-width="0.8" stroke-linejoin="round"/><rect x="5.9" y="4" width="1.3" height="4" fill="#fff"/><rect x="5.9" y="9" width="1.3" height="1.3" fill="#fff"/></svg>
<div class="t" style="left:481.30px;top:745.07px;font-size:13.5px;color:#4d5360;transform:scaleX(0.9440);transform-origin:0 0;">USB_OTG_HS</div>
<div class="a" style="left:632px;top:244px;width:8px;height:552px;background:#dce7f2;border-radius:4px"></div>
<div class="a" style="left:632px;top:338px;width:8px;height:356px;background:#3aa3dc;border-radius:4px"></div>
<div class="a" style="left:439px;top:797px;width:204px;height:2px;background:#e9ebf0;"></div>
<div class="a" style="left:643px;top:191px;width:8px;height:610px;background:#b9c3c9;"></div>
<div class="a" style="left:438px;top:800px;width:1475px;height:2px;background:#b6bcc0;"></div>
<div class="t" style="left:1086.00px;top:199.07px;font-size:13.5px;color:#555;transform:scaleX(0.9400);transform-origin:0 0;">SDIO Mode and Configuration</div>
<div class="a" style="left:651px;top:219px;width:1041px;height:18px;background:#525454;"></div>
<div class="t" style="left:1153.00px;top:221.57px;font-size:13.5px;color:#fff;transform:scaleX(0.9325);transform-origin:0 0;">Mode</div>
<div class="t" style="left:676.40px;top:251.57px;font-size:13.5px;color:#555;transform:scaleX(0.9177);transform-origin:0 0;">Mode</div>
<div class="a" style="left:712px;top:247px;width:952px;height:22px;background:#fff;border:1px solid #8a8a8a"></div>
<div class="t" style="left:714.50px;top:251.57px;font-size:13.5px;color:#444;transform:scaleX(0.9756);transform-origin:0 0;">SD 4 bits Wide bus</div>
<svg class="a" style="left:1647px;top:254px" width="12" height="8" viewBox="0 0 12 8"><path d="M1 1 L6 6 L11 1" fill="none" stroke="#555" stroke-width="1.2"/></svg>
<div class="a" style="left:651px;top:332px;width:1041px;height:8px;background:#b9c3c9;"></div>
<div class="a" style="left:651px;top:340px;width:1041px;height:18px;background:#525454;"></div>
<div class="t" style="left:1132.00px;top:343.07px;font-size:13.5px;color:#fff;transform:scaleX(0.9289);transform-origin:0 0;">Configuration</div>
<div class="a" style="left:662px;top:369px;width:145px;height:26px;background:#9ea4aa;"></div>
<div class="t" style="left:678.00px;top:375.57px;font-size:13.5px;color:#f4f4f4;transform:scaleX(0.9419);transform-origin:0 0;">Reset Configuration</div>
<div class="a" style="left:654px;top:404px;width:152px;height:20px;background:#03234b;"></div>
<svg class="a" style="left:664.7px;top:408px" width="13" height="13" viewBox="0 0 13 13"><circle cx="6.5" cy="6.5" r="6" fill="#e9ef9a"/><circle cx="6.5" cy="6.5" r="5" fill="#cfe06a"/><path d="M3.5 6.5 L5.8 8.8 L9.8 4.3" fill="none" stroke="#fff" stroke-width="1.5"/></svg>
<div class="t" style="left:683.00px;top:407.07px;font-size:13.5px;color:#eef6fb;transform:scaleX(0.9605);transform-origin:0 0;">Parameter Settings</div>
<div class="a" style="left:807px;top:404px;width:130px;height:20px;background:#03234b;"></div>
<svg class="a" style="left:818px;top:408px" width="13" height="13" viewBox="0 0 13 13"><circle cx="6.5" cy="6.5" r="6" fill="#e9ef9a"/><circle cx="6.5" cy="6.5" r="5" fill="#cfe06a"/><path d="M3.5 6.5 L5.8 8.8 L9.8 4.3" fill="none" stroke="#fff" stroke-width="1.5"/></svg>
<div class="t" style="left:836.00px;top:407.07px;font-size:13.5px;color:#eef6fb;transform:scaleX(0.9608);transform-origin:0 0;">User Constants</div>
<div class="a" style="left:938px;top:404px;width:122px;height:20px;background:#03234b;"></div>
<svg class="a" style="left:949px;top:408px" width="13" height="13" viewBox="0 0 13 13"><circle cx="6.5" cy="6.5" r="6" fill="#e9ef9a"/><circle cx="6.5" cy="6.5" r="5" fill="#cfe06a"/><path d="M3.5 6.5 L5.8 8.8 L9.8 4.3" fill="none" stroke="#fff" stroke-width="1.5"/></svg>
<div class="t" style="left:967.00px;top:407.07px;font-size:13.5px;color:#eef6fb;transform:scaleX(0.9588);transform-origin:0 0;">NVIC Settings</div>
<div class="a" style="left:1061px;top:404px;width:121px;height:20px;background:#03234b;"></div>
<svg class="a" style="left:1073px;top:408px" width="13" height="13" viewBox="0 0 13 13"><circle cx="6.5" cy="6.5" r="6" fill="#e9ef9a"/><circle cx="6.5" cy="6.5" r="5" fill="#cfe06a"/><path d="M3.5 6.5 L5.8 8.8 L9.8 4.3" fill="none" stroke="#fff" stroke-width="1.5"/></svg>
<div class="t" style="left:1090.80px;top:407.07px;font-size:13.5px;color:#eef6fb;transform:scaleX(0.9866);transform-origin:0 0;">DMA Settings</div>
<div class="a" style="left:1183px;top:404px;width:124px;height:20px;background:#3aa8dc;"></div>
<svg class="a" style="left:1194px;top:408px" width="13" height="13" viewBox="0 0 13 13"><circle cx="6.5" cy="6.5" r="6" fill="#e9ef9a"/><circle cx="6.5" cy="6.5" r="5" fill="#cfe06a"/><path d="M3.5 6.5 L5.8 8.8 L9.8 4.3" fill="none" stroke="#fff" stroke-width="1.5"/></svg>
<div class="t" style="left:1212.20px;top:407.07px;font-size:13.5px;color:#eef6fb;transform:scaleX(0.9595);transform-origin:0 0;">GPIO Settings</div>
<div class="a" style="left:652px;top:424px;width:1039px;height:3px;background:#3aa8dc;"></div>
<div class="t" style="left:663.50px;top:450.57px;font-size:13.5px;color:#444;transform:scaleX(0.9580);transform-origin:0 0;">Search Signals</div>
<div class="a" style="left:663px;top:472px;width:112px;height:20px;background:#fff;border:1px solid #8a8a8a"></div>
<div class="t" style="left:666.00px;top:475.07px;font-size:13.5px;color:#a0a0a0;font-style:italic;transform:scaleX(0.9390);transform-origin:0 0;">Search (Crtl+F)</div>
<div class="a" style="left:1524px;top:473px;width:12px;height:12px;background:#fff;border:1px solid #555"></div>
<div class="t" style="left:1541.80px;top:472.57px;font-size:13.5px;color:#333;transform:scaleX(0.9519);transform-origin:0 0;">Show only Modified Pins</div>
<div class="a" style="left:654px;top:505px;width:127px;height:18px;background:#3aa8dc;"></div>
<div class="t" style="left:679.60px;top:507.57px;font-size:13.5px;color:#f0f8fd;transform:scaleX(0.9463);transform-origin:0 0;">Pin Name</div>
<div class="a" style="left:783px;top:505px;width:126px;height:18px;background:#3aa8dc;"></div>
<div class="t" style="left:808.20px;top:507.57px;font-size:13.5px;color:#f0f8fd;transform:scaleX(0.9615);transform-origin:0 0;">Signal on Pin</div>
<div class="a" style="left:911px;top:505px;width:127px;height:18px;background:#3aa8dc;"></div>
<div class="t" style="left:924.00px;top:507.57px;font-size:13.5px;color:#f0f8fd;transform:scaleX(0.9422);transform-origin:0 0;">GPIO output level</div>
<div class="a" style="left:1040px;top:505px;width:126px;height:18px;background:#3aa8dc;"></div>
<div class="t" style="left:1069.40px;top:507.57px;font-size:13.5px;color:#f0f8fd;transform:scaleX(0.9399);transform-origin:0 0;">GPIO mode</div>
<div class="a" style="left:1168px;top:505px;width:127px;height:18px;background:#3aa8dc;"></div>
<div class="t" style="left:1169.00px;top:507.57px;font-size:13.5px;color:#f0f8fd;transform:scaleX(0.9662);transform-origin:0 0;">GPIO Pull-up/Pull-d...</div>
<div class="a" style="left:1297px;top:505px;width:126px;height:18px;background:#3aa8dc;"></div>
<div class="t" style="left:1300.00px;top:507.57px;font-size:13.5px;color:#f0f8fd;transform:scaleX(0.9848);transform-origin:0 0;">Maximum output s...</div>
<div class="a" style="left:1425px;top:505px;width:127px;height:18px;background:#3aa8dc;"></div>
<div class="t" style="left:1456.80px;top:507.57px;font-size:13.5px;color:#f0f8fd;transform:scaleX(0.9480);transform-origin:0 0;">User Label</div>
<div class="a" style="left:1554px;top:505px;width:126px;height:18px;background:#3aa8dc;"></div>
<div class="t" style="left:1593.20px;top:507.57px;font-size:13.5px;color:#f0f8fd;transform:scaleX(0.9269);transform-origin:0 0;">Modified</div>
<svg class="a" style="left:744px;top:509px" width="7" height="5" viewBox="0 0 7 5"><path d="M0 4.5 L3.5 0.5 L7 4.5 Z" fill="#1f4f7a" opacity="0.7"/></svg>
<div class="a" style="left:654px;top:523px;width:1026px;height:2px;background:#eef2f6;"></div>
<div class="a" style="left:782px;top:525px;width:1px;height:20px;background:#e6e6e6;"></div>
<div class="a" style="left:910px;top:525px;width:1px;height:20px;background:#e6e6e6;"></div>
<div class="a" style="left:1039px;top:525px;width:1px;height:20px;background:#e6e6e6;"></div>
<div class="a" style="left:1167px;top:525px;width:1px;height:20px;background:#e6e6e6;"></div>
<div class="a" style="left:1296px;top:525px;width:1px;height:20px;background:#e6e6e6;"></div>
<div class="a" style="left:1424px;top:525px;width:1px;height:20px;background:#e6e6e6;"></div>
<div class="a" style="left:1553px;top:525px;width:1px;height:20px;background:#e6e6e6;"></div>
<div class="a" style="left:654px;top:545px;width:1026px;height:1px;background:#e8e8e8;"></div>
<div class="t" style="left:654.00px;top:528.77px;font-size:13.5px;color:#222;transform:scaleX(0.9177);transform-origin:0 0;">PC10</div>
<div class="t" style="left:783.40px;top:528.77px;font-size:13.5px;color:#222;transform:scaleX(0.9155);transform-origin:0 0;">SDIO_D2</div>
<div class="t" style="left:911.40px;top:528.77px;font-size:13.5px;color:#222;transform:scaleX(0.8945);transform-origin:0 0;">n/a</div>
<div class="t" style="left:1040.20px;top:528.77px;font-size:13.5px;color:#222;transform:scaleX(0.9753);transform-origin:0 0;">Alternate Function ...</div>
<div class="t" style="left:1168.00px;top:528.77px;font-size:13.5px;color:#222;transform:scaleX(0.9517);transform-origin:0 0;">Pull-up</div>
<div class="t" style="left:1297.00px;top:528.77px;font-size:13.5px;color:#222;transform:scaleX(0.9636);transform-origin:0 0;">Very High</div>
<svg class="a" style="left:1610px;top:530px" width="12" height="12" viewBox="0 0 12 12"><rect x="0" y="0" width="12" height="12" fill="#3b8fd9"/><path d="M2.5 6 L5 8.5 L9.8 3.3" fill="none" stroke="#fff" stroke-width="1.6"/></svg>
<div class="a" style="left:782px;top:545px;width:1px;height:20px;background:#e6e6e6;"></div>
<div class="a" style="left:910px;top:545px;width:1px;height:20px;background:#e6e6e6;"></div>
<div class="a" style="left:1039px;top:545px;width:1px;height:20px;background:#e6e6e6;"></div>
<div class="a" style="left:1167px;top:545px;width:1px;height:20px;background:#e6e6e6;"></div>
<div class="a" style="left:1296px;top:545px;width:1px;height:20px;background:#e6e6e6;"></div>
<div class="a" style="left:1424px;top:545px;width:1px;height:20px;background:#e6e6e6;"></div>
<div class="a" style="left:1553px;top:545px;width:1px;height:20px;background:#e6e6e6;"></div>
<div class="a" style="left:654px;top:565px;width:1026px;height:1px;background:#e8e8e8;"></div>
<div class="t" style="left:654.00px;top:548.77px;font-size:13.5px;color:#222;transform:scaleX(0.9457);transform-origin:0 0;">PC11</div>
<div class="t" style="left:783.40px;top:548.77px;font-size:13.5px;color:#222;transform:scaleX(0.9155);transform-origin:0 0;">SDIO_D3</div>
<div class="t" style="left:911.40px;top:548.77px;font-size:13.5px;color:#222;transform:scaleX(0.8945);transform-origin:0 0;">n/a</div>
<div class="t" style="left:1040.20px;top:548.77px;font-size:13.5px;color:#222;transform:scaleX(0.9753);transform-origin:0 0;">Alternate Function ...</div>
<div class="t" style="left:1168.00px;top:548.77px;font-size:13.5px;color:#222;transform:scaleX(0.9528);transform-origin:0 0;">No pull-up and no p...</div>
<div class="t" style="left:1297.00px;top:548.77px;font-size:13.5px;color:#222;transform:scaleX(0.9636);transform-origin:0 0;">Very High</div>
<div class="a" style="left:1610px;top:550px;width:12px;height:12px;background:#fff;border:1px solid #444"></div>
<div class="a" style="left:782px;top:565px;width:1px;height:20px;background:#e6e6e6;"></div>
<div class="a" style="left:910px;top:565px;width:1px;height:20px;background:#e6e6e6;"></div>
<div class="a" style="left:1039px;top:565px;width:1px;height:20px;background:#e6e6e6;"></div>
<div class="a" style="left:1167px;top:565px;width:1px;height:20px;background:#e6e6e6;"></div>
<div class="a" style="left:1296px;top:565px;width:1px;height:20px;background:#e6e6e6;"></div>
<div class="a" style="left:1424px;top:565px;width:1px;height:20px;background:#e6e6e6;"></div>
<div class="a" style="left:1553px;top:565px;width:1px;height:20px;background:#e6e6e6;"></div>
<div class="a" style="left:654px;top:585px;width:1026px;height:1px;background:#e8e8e8;"></div>
<div class="t" style="left:654.00px;top:568.77px;font-size:13.5px;color:#222;transform:scaleX(0.9325);transform-origin:0 0;">PC12</div>
<div class="t" style="left:783.40px;top:568.77px;font-size:13.5px;color:#222;transform:scaleX(0.8924);transform-origin:0 0;">SDIO_CK</div>
<div class="t" style="left:911.40px;top:568.77px;font-size:13.5px;color:#222;transform:scaleX(0.8945);transform-origin:0 0;">n/a</div>
<div class="t" style="left:1040.20px;top:568.77px;font-size:13.5px;color:#222;transform:scaleX(0.9753);transform-origin:0 0;">Alternate Function ...</div>
<div class="t" style="left:1168.00px;top:568.77px;font-size:13.5px;color:#222;transform:scaleX(0.9528);transform-origin:0 0;">No pull-up and no p...</div>
<div class="t" style="left:1297.00px;top:568.77px;font-size:13.5px;color:#222;transform:scaleX(0.9636);transform-origin:0 0;">Very High</div>
<div class="a" style="left:1610px;top:570px;width:12px;height:12px;background:#fff;border:1px solid #444"></div>
<div class="a" style="left:654px;top:586px;width:1026px;height:19px;background:#b8d0e9;"></div>
<div class="a" style="left:782px;top:585px;width:1px;height:20px;background:#e6e6e6;"></div>
<div class="a" style="left:910px;top:585px;width:1px;height:20px;background:#e6e6e6;"></div>
<div class="a" style="left:1039px;top:585px;width:1px;height:20px;background:#e6e6e6;"></div>
<div class="a" style="left:1167px;top:585px;width:1px;height:20px;background:#e6e6e6;"></div>
<div class="a" style="left:1296px;top:585px;width:1px;height:20px;background:#e6e6e6;"></div>
<div class="a" style="left:1424px;top:585px;width:1px;height:20px;background:#e6e6e6;"></div>
<div class="a" style="left:1553px;top:585px;width:1px;height:20px;background:#e6e6e6;"></div>
<div class="a" style="left:654px;top:605px;width:1026px;height:1px;background:#e8e8e8;"></div>
<div class="t" style="left:654.00px;top:588.77px;font-size:13.5px;color:#222;transform:scaleX(0.9328);transform-origin:0 0;">PD2</div>
<div class="t" style="left:783.40px;top:588.77px;font-size:13.5px;color:#222;transform:scaleX(0.9275);transform-origin:0 0;">SDIO_CMD</div>
<div class="t" style="left:911.40px;top:588.77px;font-size:13.5px;color:#222;transform:scaleX(0.8945);transform-origin:0 0;">n/a</div>
<div class="t" style="left:1040.20px;top:588.77px;font-size:13.5px;color:#222;transform:scaleX(0.9753);transform-origin:0 0;">Alternate Function ...</div>
<div class="t" style="left:1168.00px;top:588.77px;font-size:13.5px;color:#222;transform:scaleX(0.9517);transform-origin:0 0;">Pull-up</div>
<div class="t" style="left:1297.00px;top:588.77px;font-size:13.5px;color:#222;transform:scaleX(0.9636);transform-origin:0 0;">Very High</div>
<svg class="a" style="left:1610px;top:590px" width="12" height="12" viewBox="0 0 12 12"><rect x="0" y="0" width="12" height="12" fill="#3b8fd9"/><path d="M2.5 6 L5 8.5 L9.8 3.3" fill="none" stroke="#fff" stroke-width="1.6"/></svg>
<div class="a" style="left:1681px;top:526px;width:8px;height:80px;background:#dce7f2;border-radius:4px"></div>
<div class="a" style="left:1681px;top:550px;width:8px;height:56px;background:#3aa3dc;border-radius:4px"></div>
<svg class="a" style="left:1269px;top:586px" width="12" height="19" viewBox="0 0 12 19"><path d="M0.5 0.5 V15 L4 11.5 L6.5 17.5 L9 16.5 L6.5 10.5 H11 Z" fill="#fff" stroke="#000" stroke-width="1"/></svg>
<div class="a" style="left:655px;top:615px;width:1032px;height:180px;border:1px solid #9a9a9a;border-radius:5px"></div>
<div class="a" style="left:659px;top:610px;width:116px;height:10px;background:#fff;"></div>
<div class="t" style="left:661.00px;top:608.57px;font-size:13.5px;color:#444;transform:scaleX(0.9421);transform-origin:0 0;">PD2 Configuration :</div>
<div class="t" style="left:663.00px;top:640.57px;font-size:13.5px;color:#444;transform:scaleX(0.9470);transform-origin:0 0;">GPIO mode</div>
<div class="a" style="left:1153px;top:636px;width:526px;height:22px;background:#fff;border:1px solid #8a8a8a"></div>
<div class="t" style="left:1156.00px;top:640.57px;font-size:13.5px;color:#444;transform:scaleX(0.9738);transform-origin:0 0;">Alternate Function Push Pull</div>
<svg class="a" style="left:1662px;top:643px" width="12" height="8" viewBox="0 0 12 8"><path d="M1 1 L6 6 L11 1" fill="none" stroke="#555" stroke-width="1.2"/></svg>
<div class="t" style="left:663.00px;top:682.77px;font-size:13.5px;color:#444;transform:scaleX(0.9533);transform-origin:0 0;">GPIO Pull-up/Pull-down</div>
<div class="a" style="left:1153px;top:679px;width:526px;height:22px;background:#fff;border:1px solid #8a8a8a"></div>
<div class="a" style="left:1154px;top:680px;width:504px;height:20px;background:#d6e6f5;"></div>
<div class="t" style="left:1156.00px;top:682.77px;font-size:13.5px;color:#444;transform:scaleX(0.9517);transform-origin:0 0;">Pull-up</div>
<svg class="a" style="left:1662px;top:686px" width="12" height="8" viewBox="0 0 12 8"><path d="M1 1 L6 6 L11 1" fill="none" stroke="#555" stroke-width="1.2"/></svg>
<div class="t" style="left:663.00px;top:724.97px;font-size:13.5px;color:#444;transform:scaleX(0.9684);transform-origin:0 0;">Maximum output speed</div>
<div class="a" style="left:1153px;top:721px;width:526px;height:22px;background:#fff;border:1px solid #8a8a8a"></div>
<div class="t" style="left:1156.00px;top:724.97px;font-size:13.5px;color:#444;transform:scaleX(0.9568);transform-origin:0 0;">Very High</div>
<svg class="a" style="left:1662px;top:728px" width="12" height="8" viewBox="0 0 12 8"><path d="M1 1 L6 6 L11 1" fill="none" stroke="#555" stroke-width="1.2"/></svg>
<div class="t" style="left:663.00px;top:765.17px;font-size:13.5px;color:#444;transform:scaleX(0.9403);transform-origin:0 0;">User Label</div>
<div class="a" style="left:1153px;top:762px;width:526px;height:21px;background:#fff;border:1px solid #8a8a8a"></div>
<div class="a" style="left:1692px;top:191px;width:8px;height:610px;background:#b9c3c9;"></div>
<svg class="a" style="left:1692px;top:194px" width="8" height="26" viewBox="0 0 8 26"><path d="M7 1 L1 6.5 L7 12 Z" fill="#555"/><path d="M1 14 L7 19.5 L1 25 Z" fill="#555"/></svg>
<svg class="a" style="left:1719px;top:197px" width="15" height="15" viewBox="0 0 15 15"><rect x="3" y="3" width="9" height="9" fill="none" stroke="#3d9fcf" stroke-width="1.2"/><rect x="5.5" y="5.5" width="4" height="4" fill="none" stroke="#3d9fcf" stroke-width="1"/><line x1="4" y1="0" x2="4" y2="2.5" stroke="#3d9fcf" stroke-width="0.9"/><line x1="4" y1="12.5" x2="4" y2="15" stroke="#3d9fcf" stroke-width="0.9"/><line x1="0" y1="4" x2="2.5" y2="4" stroke="#3d9fcf" stroke-width="0.9"/><line x1="12.5" y1="4" x2="15" y2="4" stroke="#3d9fcf" stroke-width="0.9"/><line x1="6" y1="0" x2="6" y2="2.5" stroke="#3d9fcf" stroke-width="0.9"/><line x1="6" y1="12.5" x2="6" y2="15" stroke="#3d9fcf" stroke-width="0.9"/><line x1="0" y1="6" x2="2.5" y2="6" stroke="#3d9fcf" stroke-width="0.9"/><line x1="12.5" y1="6" x2="15" y2="6" stroke="#3d9fcf" stroke-width="0.9"/><line x1="8" y1="0" x2="8" y2="2.5" stroke="#3d9fcf" stroke-width="0.9"/><line x1="8" y1="12.5" x2="8" y2="15" stroke="#3d9fcf" stroke-width="0.9"/><line x1="0" y1="8" x2="2.5" y2="8" stroke="#3d9fcf" stroke-width="0.9"/><line x1="12.5" y1="8" x2="15" y2="8" stroke="#3d9fcf" stroke-width="0.9"/><line x1="10" y1="0" x2="10" y2="2.5" stroke="#3d9fcf" stroke-width="0.9"/><line x1="10" y1="12.5" x2="10" y2="15" stroke="#3d9fcf" stroke-width="0.9"/><line x1="0" y1="10" x2="2.5" y2="10" stroke="#3d9fcf" stroke-width="0.9"/><line x1="12.5" y1="10" x2="15" y2="10" stroke="#3d9fcf" stroke-width="0.9"/></svg>
<div class="t" style="left:1738.70px;top:198.57px;font-size:13.5px;color:#444;font-weight:bold;transform:scaleX(0.9805);transform-origin:0 0;">Pinou...</div>
<div class="a" style="left:1700px;top:216px;width:104px;height:3px;background:#3aa8dc;"></div>
<svg class="a" style="left:1822px;top:198px" width="15" height="14" viewBox="0 0 15 14"><line x1="0" y1="1.0" x2="4" y2="1.0" stroke="#3d9fcf" stroke-width="1.2"/><line x1="0" y1="3.6" x2="4" y2="3.6" stroke="#3d9fcf" stroke-width="1.2"/><line x1="0" y1="6.2" x2="4" y2="6.2" stroke="#3d9fcf" stroke-width="1.2"/><line x1="0" y1="8.8" x2="4" y2="8.8" stroke="#3d9fcf" stroke-width="1.2"/><line x1="0" y1="11.4" x2="4" y2="11.4" stroke="#3d9fcf" stroke-width="1.2"/><line x1="5.5" y1="1.0" x2="9.5" y2="1.0" stroke="#3d9fcf" stroke-width="1.2"/><line x1="5.5" y1="3.6" x2="9.5" y2="3.6" stroke="#3d9fcf" stroke-width="1.2"/><line x1="5.5" y1="6.2" x2="9.5" y2="6.2" stroke="#3d9fcf" stroke-width="1.2"/><line x1="5.5" y1="8.8" x2="9.5" y2="8.8" stroke="#3d9fcf" stroke-width="1.2"/><line x1="11" y1="1.0" x2="15" y2="1.0" stroke="#3d9fcf" stroke-width="1.2"/><line x1="11" y1="3.6" x2="15" y2="3.6" stroke="#3d9fcf" stroke-width="1.2"/><line x1="11" y1="6.2" x2="15" y2="6.2" stroke="#3d9fcf" stroke-width="1.2"/></svg>
<div class="t" style="left:1841.40px;top:198.57px;font-size:13.5px;color:#555;transform:scaleX(0.9897);transform-origin:0 0;">System view</div>
<div class="a" style="left:1913px;top:191px;width:3px;height:610px;background:#fff;"></div>
<div class="a" style="left:1905px;top:219px;width:8px;height:582px;background:#b9c3c9;"></div>
<svg class="a" style="left:1905px;top:221px" width="8" height="29" viewBox="0 0 8 29"><path d="M7.5 1 L1 6.5 L7.5 12 Z" fill="#555"/><path d="M1 15.5 L7.5 21.5 L1 27.5 Z" fill="#555"/></svg>
<div class="a" style="left:1904px;top:291px;width:1px;height:386px;background:#111;"></div>
<div class="a" style="left:1863px;top:293px;width:42px;height:23px;background:#fdf4cd;border:1px solid #2a2a2a;border-width:1px 1px 2px 1px"></div>
<div class="t" style="left:1864.50px;top:301.34px;font-size:12px;color:#111;transform:scaleX(0.9359);transform-origin:0 0;">VBAT</div>
<div class="a" style="left:1863px;top:317px;width:42px;height:23px;background:#c1c6cb;border:1px solid #2a2a2a;border-width:1px 1px 2px 1px"></div>
<div class="t" style="left:1864.50px;top:325.34px;font-size:12px;color:#111;transform:scaleX(0.8627);transform-origin:0 0;">PC13-..</div>
<div class="a" style="left:1863px;top:341px;width:42px;height:23px;background:#c1c6cb;border:1px solid #2a2a2a;border-width:1px 1px 2px 1px"></div>
<div class="t" style="left:1864.50px;top:349.34px;font-size:12px;color:#111;transform:scaleX(0.8627);transform-origin:0 0;">PC14-..</div>
<div class="a" style="left:1863px;top:365px;width:42px;height:23px;background:#c1c6cb;border:1px solid #2a2a2a;border-width:1px 1px 2px 1px"></div>
<div class="t" style="left:1864.50px;top:373.34px;font-size:12px;color:#111;transform:scaleX(0.8627);transform-origin:0 0;">PC15-..</div>
<div class="a" style="left:1863px;top:389px;width:42px;height:23px;background:#12c03e;border:1px solid #2a2a2a;border-width:1px 1px 2px 1px"></div>
<div class="t" style="left:1864.50px;top:397.34px;font-size:12px;color:#f4fff4;transform:scaleX(0.8283);transform-origin:0 0;">PH0-O..</div>
<div class="a" style="left:1863px;top:413px;width:42px;height:23px;background:#12c03e;border:1px solid #2a2a2a;border-width:1px 1px 2px 1px"></div>
<div class="t" style="left:1864.50px;top:421.34px;font-size:12px;color:#f4fff4;transform:scaleX(0.8283);transform-origin:0 0;">PH1-O..</div>
<div class="a" style="left:1863px;top:437px;width:42px;height:23px;background:#c6cb12;border:1px solid #2a2a2a;border-width:1px 1px 2px 1px"></div>
<div class="t" style="left:1864.50px;top:445.34px;font-size:12px;color:#111;transform:scaleX(0.8111);transform-origin:0 0;">NRST</div>
<div class="a" style="left:1863px;top:461px;width:42px;height:23px;background:#c1c6cb;border:1px solid #2a2a2a;border-width:1px 1px 2px 1px"></div>
<div class="t" style="left:1864.50px;top:469.34px;font-size:12px;color:#111;transform:scaleX(0.8482);transform-origin:0 0;">PC0</div>
<div class="a" style="left:1863px;top:485px;width:42px;height:23px;background:#12c03e;border:1px solid #2a2a2a;border-width:1px 1px 2px 1px"></div>
<div class="t" style="left:1864.50px;top:493.34px;font-size:12px;color:#f4fff4;transform:scaleX(0.7497);transform-origin:0 0;">PC1</div>
<div class="a" style="left:1863px;top:509px;width:42px;height:23px;background:#c1c6cb;border:1px solid #2a2a2a;border-width:1px 1px 2px 1px"></div>
<div class="t" style="left:1864.50px;top:517.34px;font-size:12px;color:#111;transform:scaleX(0.7925);transform-origin:0 0;">PC2</div>
<div class="a" style="left:1863px;top:533px;width:42px;height:23px;background:#c1c6cb;border:1px solid #2a2a2a;border-width:1px 1px 2px 1px"></div>
<div class="t" style="left:1864.50px;top:541.34px;font-size:12px;color:#111;transform:scaleX(0.7925);transform-origin:0 0;">PC3</div>
<div class="a" style="left:1863px;top:557px;width:42px;height:23px;background:#fdf4cd;border:1px solid #2a2a2a;border-width:1px 1px 2px 1px"></div>
<div class="t" style="left:1864.50px;top:565.34px;font-size:12px;color:#111;transform:scaleX(0.9152);transform-origin:0 0;">VSSA</div>
<div class="a" style="left:1863px;top:581px;width:42px;height:23px;background:#fdf4cd;border:1px solid #2a2a2a;border-width:1px 1px 2px 1px"></div>
<div class="t" style="left:1864.50px;top:589.34px;font-size:12px;color:#111;transform:scaleX(0.8787);transform-origin:0 0;">VDDA</div>
<div class="a" style="left:1863px;top:605px;width:42px;height:23px;background:#c1c6cb;border:1px solid #2a2a2a;border-width:1px 1px 2px 1px"></div>
<div class="t" style="left:1864.50px;top:613.34px;font-size:12px;color:#111;transform:scaleX(0.9209);transform-origin:0 0;">PA0-..</div>
<div class="a" style="left:1863px;top:629px;width:42px;height:23px;background:#c1c6cb;border:1px solid #2a2a2a;border-width:1px 1px 2px 1px"></div>
<div class="t" style="left:1864.50px;top:637.34px;font-size:12px;color:#111;transform:scaleX(0.8304);transform-origin:0 0;">PA1</div>
<div class="a" style="left:1863px;top:653px;width:42px;height:23px;background:#c1c6cb;border:1px solid #2a2a2a;border-width:1px 1px 2px 1px"></div>
<div class="t" style="left:1864.50px;top:661.34px;font-size:12px;color:#111;transform:scaleX(0.8487);transform-origin:0 0;">PA2</div>
<div class="t" style="left:1788.50px;top:396.84px;font-size:12px;color:#111;transform:scaleX(0.8234);transform-origin:0 0;">RCC_OSC_IN</div>
<div class="t" style="left:1776.70px;top:420.84px;font-size:12px;color:#111;transform:scaleX(0.8325);transform-origin:0 0;">RCC_OSC_OUT</div>
<div class="t" style="left:1833.70px;top:492.84px;font-size:12px;color:#111;transform:scaleX(0.8011);transform-origin:0 0;">LED</div>
<svg class="a" style="left:1727px;top:764px" width="20" height="20" viewBox="0 0 20 20"><circle cx="8" cy="8" r="7" fill="none" stroke="#3d9fcf" stroke-width="1.4"/><line x1="13" y1="13" x2="19" y2="19" stroke="#3d9fcf" stroke-width="1.6"/><line x1="4.5" y1="8" x2="11.5" y2="8" stroke="#3d9fcf" stroke-width="1.4"/><line x1="8" y1="4.5" x2="8" y2="11.5" stroke="#3d9fcf" stroke-width="1.4"/></svg>
<svg class="a" style="left:1796px;top:763px" width="21" height="21" viewBox="0 0 21 21"><path d="M1 6 V1 H6 M15 1 H20 V6 M20 15 V20 H15 M6 20 H1 V15" fill="none" stroke="#3d9fcf" stroke-width="1.5"/></svg>
<svg class="a" style="left:1865px;top:764px" width="20" height="20" viewBox="0 0 20 20"><circle cx="8" cy="8" r="7" fill="none" stroke="#3d9fcf" stroke-width="1.4"/><line x1="13" y1="13" x2="19" y2="19" stroke="#3d9fcf" stroke-width="1.6"/><line x1="4.5" y1="8" x2="11.5" y2="8" stroke="#3d9fcf" stroke-width="1.4"/></svg>
<div class="a" style="left:1700px;top:792px;width:204px;height:8px;background:#dce7f2;border-radius:4px"></div>
<div class="a" style="left:1700px;top:792px;width:63px;height:8px;background:#3aa3dc;border-radius:4px"></div>
<div class="a" style="left:435px;top:808px;width:1481px;height:247px;background:#fff;border-radius:6px 6px 0 0;border:1px solid #e6e9f5;border-bottom:none"></div>
<div class="a" style="left:435px;top:808px;width:1481px;height:30px;background:linear-gradient(#f5f6fc,#f0f1fa);border-radius:6px 6px 0 0"></div>
<div class="a" style="left:437px;top:809px;width:101px;height:29px;background:linear-gradient(#d9e3ec,#eef2f7 40%,#fbfcfe);border-radius:6px 8px 0 0;border-top:1px solid #c9d2dc"></div>
<svg class="a" style="left:442px;top:817px" width="14" height="15" viewBox="0 0 14 15"><rect x="0" y="0" width="14" height="11" rx="1.5" fill="#3a5f9c"/><rect x="2" y="2" width="10" height="7" fill="#e2eaf6"/><line x1="3" y1="4" x2="9" y2="4" stroke="#3a5f9c" stroke-width="1"/><line x1="3" y1="6.5" x2="10" y2="6.5" stroke="#3a5f9c" stroke-width="1"/><rect x="5" y="11" width="4" height="2" fill="#3a5f9c"/><rect x="2" y="13" width="10" height="1.6" fill="#3a5f9c"/></svg>
<div class="t" style="left:459.70px;top:818.80px;font-size:15px;color:#000;transform:scaleX(0.9501);transform-origin:0 0;">Console</div>
<svg class="a" style="left:520px;top:819px" width="11" height="11" viewBox="0 0 11 11"><path d="M0.50 2.32 L2.32 0.50 L5.50 3.68 L8.68 0.50 L10.50 2.32 L7.32 5.50 L10.50 8.68 L8.68 10.50 L5.50 7.32 L2.32 10.50 L0.50 8.68 L3.68 5.50 Z" fill="#fff" stroke="#555" stroke-width="1.1" stroke-linejoin="round"/></svg>
<svg class="a" style="left:543px;top:816px" width="16" height="16" viewBox="0 0 16 16"><ellipse cx="8" cy="8.5" rx="3.6" ry="4.3" transform="rotate(-40 8 8.5)" fill="#dcefe0" stroke="#8fb59a" stroke-width="1.2"/><path d="M4.5 0.5 L5 4 M8.5 1.5 L8 4.5 M0 4.5 L4 5 M1 8.5 L4.5 8 M4.5 11 L5 14.5 M8.5 12 L9.5 14.5 M11 4 L13.5 5.5 M12 8.5 L14.5 10" stroke="#8fb59a" stroke-width="1.3" stroke-linecap="round"/></svg>
<div class="t" style="left:562.00px;top:818.80px;font-size:15px;color:#8a8a8a;transform:scaleX(0.9841);transform-origin:0 0;">Debug</div>
<svg class="a" style="left:617px;top:816px" width="15" height="15" viewBox="0 0 15 15"><path d="M2 13 L10 5 L13 8 L5 15 Z" fill="#f0dcb8" stroke="#c8a878" stroke-width="0.8"/><path d="M10 5 L12.5 2 L15 4.5 L13 8 Z" fill="#e0c090"/></svg>
<div class="t" style="left:635.00px;top:818.80px;font-size:15px;color:#8a8a8a;transform:scaleX(0.9362);transform-origin:0 0;">Search</div>
<svg class="a" style="left:1582px;top:814px" width="14" height="16" viewBox="0 0 14 16"><path d="M4 1 H10 V8 H13 L7 15 L1 8 H4 Z" fill="#fbe59a" stroke="#c99a2a" stroke-width="1"/></svg>
<svg class="a" style="left:1605px;top:814px" width="14" height="16" viewBox="0 0 14 16"><path d="M4 15 H10 V8 H13 L7 1 L1 8 H4 Z" fill="#fbe59a" stroke="#c99a2a" stroke-width="1"/></svg>
<div class="a" style="left:1624px;top:811px;width:23px;height:21px;background:#c5e2fa;border:1px solid #99c9f0"></div>
<svg class="a" style="left:1627px;top:813px" width="17" height="17" viewBox="0 0 17 17"><path d="M7 1 L1 6 L7 10 V7.5 H13 V4.5 H7 Z" fill="#fbe59a" stroke="#c99a2a" stroke-width="0.9"/><path d="M10 7 L16 12 L10 16.5 V13.5 H4 V10.5 H10 Z" fill="#fbe59a" stroke="#c99a2a" stroke-width="0.9"/></svg>
<div class="a" style="left:1650px;top:813px;width:1px;height:16px;background:#8d94a3"></div>
<svg class="a" style="left:1658px;top:814px" width="17" height="16" viewBox="0 0 17 16"><rect x="0.5" y="0.5" width="11" height="15" fill="#f4f4f4" stroke="#8a95a8"/><rect x="12.5" y="0.5" width="4" height="15" fill="#fff" stroke="#8a95a8"/><rect x="13.5" y="2" width="2" height="3" fill="#555"/><rect x="13.5" y="10" width="2" height="3" fill="#555"/><rect x="2" y="9" width="7" height="5" fill="#c8cfdb"/></svg>
<svg class="a" style="left:1682px;top:814px" width="17" height="16" viewBox="0 0 17 16"><rect x="0.5" y="0.5" width="11" height="15" fill="#f4f4f4" stroke="#8a95a8"/><rect x="12.5" y="0.5" width="4" height="15" fill="#fff" stroke="#8a95a8"/><rect x="13.5" y="2" width="2" height="3" fill="#555"/><rect x="13.5" y="10" width="2" height="3" fill="#555"/><rect x="1.5" y="8" width="7" height="6" rx="1" fill="#f0c030" stroke="#a07a10" stroke-width="0.8"/></svg>
<svg class="a" style="left:1706px;top:816px" width="15" height="10" viewBox="0 0 15 10"><line x1="0" y1="1" x2="14" y2="1" stroke="#aab" stroke-width="1.2"/><line x1="0" y1="4.5" x2="10" y2="4.5" stroke="#aab" stroke-width="1.2"/><line x1="0" y1="8" x2="7" y2="8" stroke="#aab" stroke-width="1.2"/></svg>
<svg class="a" style="left:1728px;top:814px" width="16" height="16" viewBox="0 0 16 16"><path d="M0.5 0.5 H8 L11.5 4 V14.5 H0.5 Z" fill="#fff" stroke="#8a95a8"/><line x1="2.5" y1="5" x2="9" y2="5" stroke="#8a95a8"/><line x1="2.5" y1="8" x2="9" y2="8" stroke="#8a95a8"/><path d="M9 10 L15 15.5 M15 10 L9 15.5" stroke="#777" stroke-width="1.8"/></svg>
<div class="a" style="left:1750px;top:813px;width:1px;height:16px;background:#8d94a3"></div>
<svg class="a" style="left:1759px;top:813px" width="17" height="16" viewBox="0 0 17 16"><rect x="0.5" y="3.5" width="14" height="11" fill="#fff" stroke="#555"/><rect x="0.5" y="3.5" width="14" height="3" fill="#6b9ad8"/><path d="M9 9 L12 12 L16 1" fill="none" stroke="#2c8a3a" stroke-width="2"/></svg>
<svg class="a" style="left:1784px;top:814px" width="14" height="15" viewBox="0 0 14 15"><rect x="0" y="0" width="14" height="11" rx="1.5" fill="#2d4f8e"/><rect x="2" y="2" width="10" height="7" fill="#e2eaf6"/><line x1="3" y1="4" x2="9" y2="4" stroke="#2d4f8e" stroke-width="1"/><line x1="3" y1="6.5" x2="10" y2="6.5" stroke="#2d4f8e" stroke-width="1"/><rect x="5" y="11" width="4" height="2" fill="#2d4f8e"/><rect x="2" y="13" width="10" height="1.6" fill="#2d4f8e"/></svg>
<svg class="a" style="left:1806px;top:819px" width="10" height="6" viewBox="0 0 10 6"><path d="M0 0 H10 L5 5.5 Z" fill="#000"/></svg>
<svg class="a" style="left:1824px;top:813px" width="17" height="16" viewBox="0 0 17 16"><rect x="0.5" y="3.5" width="14" height="11" fill="#fff" stroke="#8a7a55"/><rect x="0.5" y="3.5" width="14" height="3" fill="#6b9ad8"/><path d="M13 0 L14 2.5 L16.5 2.5 L14.5 4 L15.5 6.5 L13 5 L10.5 6.5 L11.5 4 L9.5 2.5 L12 2.5 Z" fill="#f5c842" stroke="#c9962e" stroke-width="0.5"/></svg>
<svg class="a" style="left:1848px;top:819px" width="10" height="6" viewBox="0 0 10 6"><path d="M0 0 H10 L5 5.5 Z" fill="#000"/></svg>
<svg class="a" style="left:1868px;top:817px" width="11" height="5" viewBox="0 0 11 5"><rect x="0.5" y="0.5" width="9.5" height="4" fill="#fff" stroke="#555" stroke-width="1"/></svg>
<svg class="a" style="left:1891px;top:817px" width="12" height="11" viewBox="0 0 12 11"><rect x="0.5" y="0.5" width="11" height="10" fill="#fff" stroke="#555" stroke-width="1"/><line x1="0.5" y1="2.5" x2="11.5" y2="2.5" stroke="#555"/></svg>
<div class="t" style="left:437.70px;top:844.30px;font-size:15px;color:#000;">CDT Build Console [adafruit-f405-blinky]</div>
<div class="a" style="left:438px;top:861px;width:1475px;height:1px;background:#7a7a7a;"></div>
<div class="t" style="left:440.00px;top:874.35px;font-size:16.5px;color:#000;font-family:'Liberation Mono',monospace;transform:scaleX(0.9089);transform-origin:0 0;">Finished building: adafruit-f405-blinky.bin</div>
<div class="t" style="left:440.00px;top:914.35px;font-size:16.5px;color:#000;font-family:'Liberation Mono',monospace;transform:scaleX(0.9089);transform-origin:0 0;">Finished building: adafruit-f405-blinky.list</div>
<div class="t" style="left:440.00px;top:974.35px;font-size:16.5px;color:#2020cc;font-family:'Liberation Mono',monospace;transform:scaleX(0.9073);transform-origin:0 0;">17:12:34 Build Finished. 0 errors, 0 warnings. (took 2s.527ms)</div>
<div class="a" style="left:1893px;top:862px;width:19px;height:170px;background:#f0f0f0;"></div>
<div class="a" style="left:1893px;top:958px;width:19px;height:52px;background:#cdcdcd;"></div>
<svg class="a" style="left:1898px;top:871px" width="10" height="7" viewBox="0 0 10 7"><path d="M1 6 L5 1.5 L9 6" fill="none" stroke="#555" stroke-width="1.6"/></svg>
<svg class="a" style="left:1898px;top:1016px" width="10" height="7" viewBox="0 0 10 7"><path d="M1 1 L5 5.5 L9 1" fill="none" stroke="#555" stroke-width="1.6"/></svg>
<div class="a" style="left:438px;top:1032px;width:1474px;height:19px;background:#f0f0f0;"></div>
<div class="a" style="left:459px;top:1032px;width:505px;height:19px;background:#cdcdcd;"></div>
<svg class="a" style="left:444px;top:1037px" width="7" height="10" viewBox="0 0 7 10"><path d="M6 1 L1.5 5 L6 9" fill="none" stroke="#555" stroke-width="1.6"/></svg>
<svg class="a" style="left:1878px;top:1037px" width="7" height="10" viewBox="0 0 7 10"><path d="M1 1 L5.5 5 L1 9" fill="none" stroke="#555" stroke-width="1.6"/></svg>
<div class="a" style="left:1518px;top:1055px;width:41px;height:22px;border-right:1px solid #b8bccc;border-bottom:1px solid #b8bccc"></div>
<svg class="a" style="left:1522px;top:1059px" width="18" height="17" viewBox="0 0 18 17"><path d="M1 5 L4 1 L8 5 Z" fill="#f0c030" stroke="#a07a10" stroke-width="0.6"/><circle cx="5" cy="12" r="4" fill="#e8e8e8" stroke="#888"/><rect x="8.5" y="6.5" width="8" height="7" fill="#cfe0f5" stroke="#557"/></svg>
<svg class="a" style="left:1561px;top:1058px" width="2" height="18" viewBox="0 0 2 18"><rect x="0" y="0" width="2" height="2" fill="#9aa0ad"/><rect x="0" y="4" width="2" height="2" fill="#9aa0ad"/><rect x="0" y="8" width="2" height="2" fill="#9aa0ad"/><rect x="0" y="12" width="2" height="2" fill="#9aa0ad"/><rect x="0" y="16" width="2" height="2" fill="#9aa0ad"/></svg>
</body></html>
